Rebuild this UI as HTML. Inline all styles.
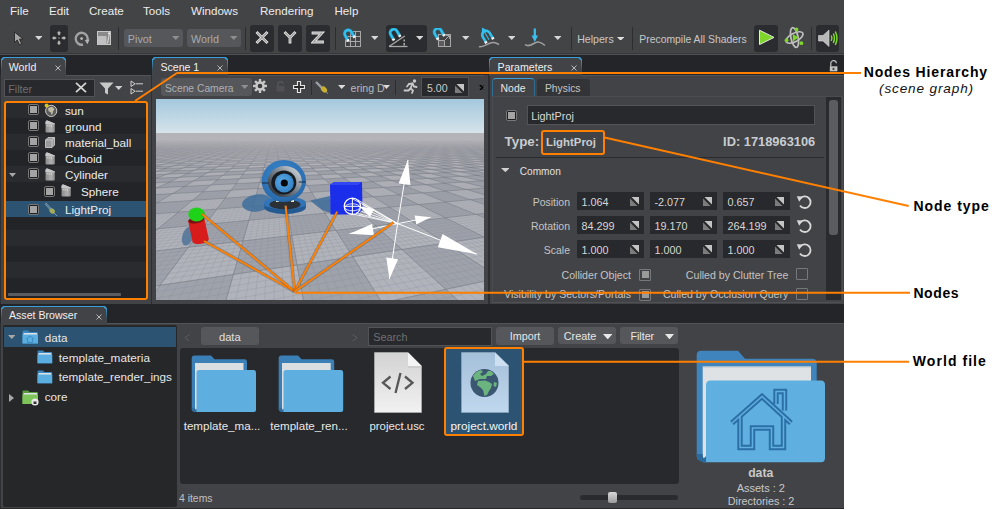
<!DOCTYPE html><html><head><meta charset="utf-8"><style>
html,body{margin:0;padding:0;background:#fff;width:1000px;height:510px;overflow:hidden;position:relative;}
.t{position:absolute;white-space:nowrap;font-family:"Liberation Sans", sans-serif;}
.r{position:absolute;}
</style></head><body>
<div class="r" style="left:0px;top:0px;width:844px;height:509px;background:#434446;"></div>
<div class="r" style="left:0px;top:508px;width:844px;height:1px;background:#2a2a2c;"></div>
<div class="t" style="left:10px;top:5px;font-size:11.6px;line-height:11.6px;color:#ececec;font-weight:normal;font-style:normal;letter-spacing:0px;">File</div>
<div class="t" style="left:49px;top:5px;font-size:11.6px;line-height:11.6px;color:#ececec;font-weight:normal;font-style:normal;letter-spacing:0px;">Edit</div>
<div class="t" style="left:89px;top:5px;font-size:11.6px;line-height:11.6px;color:#ececec;font-weight:normal;font-style:normal;letter-spacing:0px;">Create</div>
<div class="t" style="left:143px;top:5px;font-size:11.6px;line-height:11.6px;color:#ececec;font-weight:normal;font-style:normal;letter-spacing:0px;">Tools</div>
<div class="t" style="left:191px;top:5px;font-size:11.6px;line-height:11.6px;color:#ececec;font-weight:normal;font-style:normal;letter-spacing:0px;">Windows</div>
<div class="t" style="left:260px;top:5px;font-size:11.6px;line-height:11.6px;color:#ececec;font-weight:normal;font-style:normal;letter-spacing:0px;">Rendering</div>
<div class="t" style="left:334.5px;top:5px;font-size:11.6px;line-height:11.6px;color:#ececec;font-weight:normal;font-style:normal;letter-spacing:0px;">Help</div>
<div class="r" style="left:0px;top:53px;width:844px;height:1px;background:#37383b;"></div>
<div class="r" style="left:0px;top:54px;width:844px;height:1px;background:#505155;"></div>
<div class="r" style="left:0px;top:55px;width:844px;height:453px;background:#242528;"></div>
<svg class="r" style="left:13px;top:31px;" width="12" height="15" viewBox="0 0 12 15"><path d="M1.5 1L1.5 11.5L4.2 9L6.5 13.6L8.6 12.6L6.4 8.2L10 8Z" fill="#a4a4a4" stroke="#1e1e1e" stroke-width="0.8" stroke-linejoin="round"/></svg>
<svg class="r" style="left:34.75px;top:36px;" width="7.5" height="4" viewBox="0 0 7.5 4"><path d="M0 0H7.5L3.75 4Z" fill="#d8d8d8"/></svg>
<div class="r" style="left:50px;top:25px;width:18px;height:26.5px;background:#2b2c2f;border-radius:3px;"></div>
<svg class="r" style="left:50.5px;top:30px;" width="16" height="16" viewBox="0 0 16 16"><g fill="#b8b8b8" stroke="#111" stroke-width="0.5"><path d="M8 0.6L10.8 3.6H9.3V5.6H6.7V3.6H5.2Z"/><path d="M8 15.4L10.8 12.4H9.3V10.4H6.7V12.4H5.2Z"/><path d="M0.6 8L3.6 5.2V6.7H5.6V9.3H3.6V10.8Z"/><path d="M15.4 8L12.4 5.2V6.7H10.4V9.3H12.4V10.8Z"/><circle cx="8" cy="8" r="1"/></g></svg>
<svg class="r" style="left:73.5px;top:30.5px;" width="16" height="16" viewBox="0 0 16 16"><path d="M9 13.6A6 6 0 1 1 13.4 9.6" fill="none" stroke="#a4a4a4" stroke-width="2.3"/><path d="M10.8 9L15.6 8.6L13.4 13.2Z" fill="#b4b4b4"/><circle cx="7.6" cy="7.6" r="1.3" fill="#c4c4c4"/></svg>
<svg class="r" style="left:96.5px;top:30.5px;" width="14" height="14" viewBox="0 0 14 14"><rect x="0.5" y="0.5" width="13" height="13" fill="#8a8a8a" stroke="#c8c8c8" stroke-width="1"/><rect x="1" y="5" width="8.5" height="8.5" rx="1" fill="#c0c0c0"/><path d="M10.5 12.5L12.5 2" stroke="#e0e0e0" stroke-width="1"/><circle cx="12" cy="2.2" r="1" fill="#eee"/></svg>
<div class="r" style="left:118px;top:27px;width:1px;height:23px;background:#2c2d30;"></div>
<div class="r" style="left:124px;top:29px;width:59px;height:18px;background:#56575b;border-radius:3px;"></div>
<div class="t" style="left:127.8px;top:34px;font-size:10.8px;line-height:10.8px;color:#a9a9a9;font-weight:normal;font-style:normal;letter-spacing:0px;">Pivot</div>
<svg class="r" style="left:172px;top:36px;" width="7.5" height="4" viewBox="0 0 7.5 4"><path d="M0 0H7.5L3.75 4Z" fill="#8e8e8e"/></svg>
<div class="r" style="left:187px;top:29px;width:54px;height:18px;background:#56575b;border-radius:3px;"></div>
<div class="t" style="left:191px;top:34px;font-size:10.8px;line-height:10.8px;color:#a9a9a9;font-weight:normal;font-style:normal;letter-spacing:0px;">World</div>
<svg class="r" style="left:230px;top:36px;" width="7.5" height="4" viewBox="0 0 7.5 4"><path d="M0 0H7.5L3.75 4Z" fill="#8e8e8e"/></svg>
<div class="r" style="left:245px;top:27px;width:1px;height:23px;background:#2c2d30;"></div>
<div class="r" style="left:250px;top:25px;width:23.80000000000001px;height:26.5px;background:#2b2c2f;border-radius:3px;"></div>
<svg class="r" style="left:254.5px;top:31px;" width="14" height="13" viewBox="0 0 14 13"><path d="M2.5 2L11.5 11M11.5 2L2.5 11" fill="none" stroke="#e4e4e4" stroke-width="2.8" stroke-linecap="square"/><path d="M2.5 2L11.5 11M11.5 2L2.5 11" fill="none" stroke="#9c9c9c" stroke-width="1.1" stroke-linecap="square"/></svg>
<div class="r" style="left:278px;top:25px;width:23.80000000000001px;height:26.5px;background:#2b2c2f;border-radius:3px;"></div>
<svg class="r" style="left:282.5px;top:31px;" width="14" height="13" viewBox="0 0 14 13"><path d="M2.5 2L7 6.5L11.5 2M7 6.5V11" fill="none" stroke="#e4e4e4" stroke-width="2.8" stroke-linecap="square"/><path d="M2.5 2L7 6.5L11.5 2M7 6.5V11" fill="none" stroke="#9c9c9c" stroke-width="1.1" stroke-linecap="square"/></svg>
<div class="r" style="left:306px;top:25px;width:23.80000000000001px;height:26.5px;background:#2b2c2f;border-radius:3px;"></div>
<svg class="r" style="left:311px;top:31px;" width="14" height="13" viewBox="0 0 14 13"><path d="M2 2H11L2.5 11H11.5" fill="none" stroke="#e4e4e4" stroke-width="2.8" stroke-linecap="square"/><path d="M2 2H11L2.5 11H11.5" fill="none" stroke="#9c9c9c" stroke-width="1.1" stroke-linecap="square"/></svg>
<div class="r" style="left:335px;top:27px;width:1px;height:23px;background:#2c2d30;"></div>
<svg class="r" style="left:342px;top:28px;" width="20" height="20" viewBox="0 0 20 20"><g stroke="#a8a8a8" stroke-width="1" fill="none"><rect x="3.5" y="3.5" width="15" height="15"/><path d="M8.5 3.5V18.5M13.5 3.5V18.5M3.5 8.5H18.5M3.5 13.5H18.5"/></g><g transform="translate(6.2 5.6) rotate(-30)"><path d="M-3.6 4.8V0A3.6 3.6 0 0 1 3.6 0V4.8" fill="none" stroke="#1d7fa6" stroke-width="3.4"/><path d="M-3.6 4.8V0A3.6 3.6 0 0 1 3.6 0V4.8" fill="none" stroke="#34c0ec" stroke-width="2.4"/><rect x="-5" y="4.6" width="2.8" height="2.2" fill="#f4f4f4"/><rect x="2.2" y="4.6" width="2.8" height="2.2" fill="#f4f4f4"/></g></svg>
<svg class="r" style="left:370.6px;top:36px;" width="7.5" height="4" viewBox="0 0 7.5 4"><path d="M0 0H7.5L3.75 4Z" fill="#d8d8d8"/></svg>
<div class="r" style="left:386px;top:25px;width:41px;height:26.5px;background:#2b2c2f;border-radius:3px;"></div>
<svg class="r" style="left:387px;top:28px;" width="22" height="20" viewBox="0 0 22 20"><path d="M2 18.5H20.5" stroke="#a8a8a8" stroke-width="1.3"/><path d="M2 18.5L17.8 8" stroke="#a8a8a8" stroke-width="1.3"/><path d="M17.2 11.5V13.5M17.2 15V17.5" stroke="#a8a8a8" stroke-width="1.6"/><g transform="translate(6.8 4.8) rotate(-30)"><path d="M-3.6 4.8V0A3.6 3.6 0 0 1 3.6 0V4.8" fill="none" stroke="#1d7fa6" stroke-width="3.4"/><path d="M-3.6 4.8V0A3.6 3.6 0 0 1 3.6 0V4.8" fill="none" stroke="#34c0ec" stroke-width="2.4"/><rect x="-5" y="4.6" width="2.8" height="2.2" fill="#f4f4f4"/><rect x="2.2" y="4.6" width="2.8" height="2.2" fill="#f4f4f4"/></g></svg>
<svg class="r" style="left:415.6px;top:36px;" width="7.5" height="4" viewBox="0 0 7.5 4"><path d="M0 0H7.5L3.75 4Z" fill="#d8d8d8"/></svg>
<svg class="r" style="left:432px;top:28px;" width="21" height="20" viewBox="0 0 21 20"><g stroke="#a8a8a8" stroke-width="1" fill="none"><rect x="6.5" y="6.5" width="12" height="12"/><path d="M6.5 12.5H12.5V18.5M12.5 12.5L17 8M14.2 7.5H17.5V10.8"/></g><rect x="7" y="13" width="5" height="5" fill="#5c5c5e"/><g transform="translate(5.9 4) rotate(-30)"><path d="M-3.6 4.8V0A3.6 3.6 0 0 1 3.6 0V4.8" fill="none" stroke="#1d7fa6" stroke-width="3.4"/><path d="M-3.6 4.8V0A3.6 3.6 0 0 1 3.6 0V4.8" fill="none" stroke="#34c0ec" stroke-width="2.4"/><rect x="-5" y="4.6" width="2.8" height="2.2" fill="#f4f4f4"/><rect x="2.2" y="4.6" width="2.8" height="2.2" fill="#f4f4f4"/></g></svg>
<svg class="r" style="left:462px;top:36px;" width="7.5" height="4" viewBox="0 0 7.5 4"><path d="M0 0H7.5L3.75 4Z" fill="#d8d8d8"/></svg>
<svg class="r" style="left:478px;top:26px;" width="23" height="23" viewBox="0 0 23 23"><path d="M1 20.5C4 22 7 19 11 17.5S16 16 21 18.5" fill="none" stroke="#a0a0a0" stroke-width="1.5"/><g transform="translate(8 8.5) rotate(-30)"><path d="M-4 6V0.5A4 4 0 0 1 4 0.5V6" fill="none" stroke="#34c0ec" stroke-width="2.6"/><path d="M0 -1V6" stroke="#34c0ec" stroke-width="1"/><rect x="-5.4" y="5.6" width="2.8" height="2.2" fill="#f4f4f4"/><rect x="2.6" y="5.6" width="2.8" height="2.2" fill="#f4f4f4"/><path d="M0 -8L-2.8 -3.4H2.8Z" fill="#34c0ec"/><path d="M0 -4V-1" stroke="#34c0ec" stroke-width="1"/></g></svg>
<svg class="r" style="left:507.75px;top:36px;" width="7.5" height="4" viewBox="0 0 7.5 4"><path d="M0 0H7.5L3.75 4Z" fill="#d8d8d8"/></svg>
<svg class="r" style="left:524px;top:28px;" width="22" height="20" viewBox="0 0 22 20"><path d="M1 16.5C4 19 7 17 10.8 15S17 14.5 21 17.5" fill="none" stroke="#a0a0a0" stroke-width="1.5"/><path d="M10.8 0.5V9" stroke="#3cc0ee" stroke-width="2.2"/><path d="M7.6 7.5H14L10.8 14Z" fill="#3cc0ee"/></svg>
<svg class="r" style="left:553.75px;top:36px;" width="7.5" height="4" viewBox="0 0 7.5 4"><path d="M0 0H7.5L3.75 4Z" fill="#d8d8d8"/></svg>
<div class="r" style="left:570.5px;top:27px;width:1px;height:23px;background:#2c2d30;"></div>
<div class="t" style="left:577.2px;top:34px;font-size:10.6px;line-height:10.6px;color:#c8c8c8;font-weight:normal;font-style:normal;letter-spacing:0px;">Helpers</div>
<svg class="r" style="left:617px;top:36.5px;" width="7.3" height="3.8" viewBox="0 0 7.3 3.8"><path d="M0 0H7.3L3.65 3.8Z" fill="#e0e0e0"/></svg>
<div class="r" style="left:632px;top:27px;width:1px;height:23px;background:#2c2d30;"></div>
<div class="t" style="left:639.3px;top:35px;font-size:10.4px;line-height:10.4px;color:#c8c8c8;font-weight:normal;font-style:normal;letter-spacing:0px;">Precompile All Shaders</div>
<div class="r" style="left:754px;top:25px;width:24px;height:26.5px;background:#2b2c2f;border-radius:3px;"></div>
<svg class="r" style="left:758px;top:29px;" width="18" height="17" viewBox="0 0 18 17"><path d="M1.5 1.2V15.6L16 8.4Z" fill="#7fd62a" stroke="#e8e8e8" stroke-width="1"/></svg>
<svg class="r" style="left:784px;top:26px;" width="22" height="23" viewBox="0 0 22 23"><g fill="none" stroke="#c0c0c0" stroke-width="1.7"><ellipse cx="10.5" cy="11.5" rx="9.4" ry="4.2" transform="rotate(-28 10.5 11.5)"/><ellipse cx="10.5" cy="11.5" rx="10" ry="3.6" transform="rotate(78 10.5 11.5)"/></g><path d="M8.8 8V15.5L14.6 11.5Z" fill="#7fd62a"/><circle cx="12.5" cy="3.5" r="1.9" fill="#7fd62a"/><circle cx="2.5" cy="14.2" r="1.9" fill="#7fd62a"/><circle cx="17.4" cy="17.2" r="1.9" fill="#7fd62a"/></svg>
<div class="r" style="left:811px;top:27px;width:1px;height:23px;background:#2c2d30;"></div>
<div class="r" style="left:816.2px;top:25px;width:23.299999999999955px;height:26.5px;background:#2b2c2f;border-radius:3px;"></div>
<svg class="r" style="left:817px;top:27px;" width="22" height="22" viewBox="0 0 22 22"><path d="M1.5 8.5H6L12 3V19.5L6 14H1.5Z" fill="#b8b8b8" stroke="#d8d8d8" stroke-width="0.6"/><g fill="none" stroke="#7fd62a" stroke-width="1.5"><path d="M14.3 8.5Q15.6 11.2 14.3 14"/><path d="M16.3 6.5Q18.6 11.2 16.3 16"/><path d="M18.3 4.5Q21.6 11.2 18.3 18"/></g></svg>
<div class="r" style="left:1px;top:57px;width:65px;height:19px;background:#424346;border-radius:4px 4px 0 0;box-shadow:inset 0 1px 0 #3a9fd8;"></div>
<div class="r" style="left:1px;top:59px;width:1px;height:16px;background:linear-gradient(#3a9fd8,#3a4b58 70%,#45484c);"></div>
<div class="r" style="left:65px;top:59px;width:1px;height:16px;background:linear-gradient(#3a9fd8,#3a4b58 70%,#45484c);"></div>
<div class="r" style="left:2px;top:57px;width:63px;height:3px;border-top:1px solid #3a9fd8;border-radius:4px 4px 0 0;box-sizing:border-box;border-left:1px solid #3a9fd8;border-right:1px solid #3a9fd8;"></div>
<div class="t" style="left:8.8px;top:62px;font-size:10.6px;line-height:10.6px;color:#f0f0f0;font-weight:normal;font-style:normal;letter-spacing:0px;">World</div>
<svg class="r" style="left:54.7px;top:65px;" width="6" height="6" viewBox="0 0 6 6"><path d="M0.5 0.5L5.5 5.5M5.5 0.5L0.5 5.5" stroke="#c4c4c4" stroke-width="0.9"/></svg>
<div class="r" style="left:0px;top:75px;width:151px;height:229px;background:#424346;"></div>
<div class="r" style="left:66px;top:75px;width:85px;height:1px;background:#525356;"></div>
<div class="r" style="left:0px;top:75px;width:1px;height:229px;background:#2e2f32;"></div>
<div class="r" style="left:3.8px;top:78.5px;width:89.4px;height:16.3px;background:#28292c;border:1px solid #525357;"></div>
<div class="t" style="left:8.2px;top:84px;font-size:10.8px;line-height:10.8px;color:#6f6f6f;font-weight:normal;font-style:normal;letter-spacing:0px;">Filter</div>
<svg class="r" style="left:74.5px;top:82px;" width="12" height="11" viewBox="0 0 12 11"><path d="M1 0.8L11 10.2M11 0.8L1 10.2" stroke="#d4d4d4" stroke-width="1.8"/></svg>
<svg class="r" style="left:98.5px;top:81.5px;" width="15" height="13" viewBox="0 0 15 13"><path d="M0.5 0.5H14.5L9 6.5V12.5L6 11V6.5Z" fill="#c8c8c8"/></svg>
<svg class="r" style="left:114.8px;top:86px;" width="7.4" height="4" viewBox="0 0 7.4 4"><path d="M0 0H7.4L3.7 4Z" fill="#d0d0d0"/></svg>
<svg class="r" style="left:130px;top:80px;" width="14" height="16" viewBox="0 0 14 16"><g fill="none" stroke="#d0d0d0" stroke-width="1"><path d="M1 1V6.5L5 3.8Z"/><path d="M1 8.5V14L5 11.2Z"/><path d="M5.5 3.8H13M5.5 11.2H13"/></g></svg>
<div class="r" style="left:5px;top:102px;width:142px;height:16px;background:#2a2b2e;"></div>
<div class="r" style="left:5px;top:118px;width:142px;height:16px;background:#232427;"></div>
<div class="r" style="left:5px;top:134px;width:142px;height:16px;background:#2a2b2e;"></div>
<div class="r" style="left:5px;top:150px;width:142px;height:16px;background:#232427;"></div>
<div class="r" style="left:5px;top:166px;width:142px;height:16px;background:#2a2b2e;"></div>
<div class="r" style="left:5px;top:182px;width:142px;height:19px;background:#232427;"></div>
<div class="r" style="left:5px;top:201px;width:142px;height:16px;background:#2c5472;"></div>
<div class="r" style="left:5px;top:217px;width:142px;height:12.6px;background:#232427;"></div>
<div class="r" style="left:5px;top:229.6px;width:142px;height:16px;background:#2a2b2e;"></div>
<div class="r" style="left:5px;top:245.6px;width:142px;height:16px;background:#232427;"></div>
<div class="r" style="left:5px;top:261.6px;width:142px;height:16px;background:#2a2b2e;"></div>
<div class="r" style="left:5px;top:277.6px;width:142px;height:12.4px;background:#232427;"></div>
<div class="r" style="left:5px;top:290px;width:142px;height:8px;background:#232427;"></div>
<div class="r" style="left:7.8px;top:293px;width:113.2px;height:3px;background:#5b5c5f;border-radius:1px;"></div>
<div class="r" style="left:28px;top:104px;width:9px;height:9px;border:1px solid #787878;border-radius:2px;background:#1e1f22;"></div>
<div class="r" style="left:30px;top:106px;width:7px;height:7px;background:#a4a4a4;"></div>
<svg class="r" style="left:44px;top:103px;" width="14" height="14" viewBox="0 0 14 14"><circle cx="7.2" cy="7.9" r="5.6" fill="#5c5c5c" stroke="#c8c8c8" stroke-width="1"/><path d="M4 5.5Q6 3.4 9 4.2L10.5 6.2L9.2 8L8.6 10.8L7.4 11.8L6.8 9.2L4.6 8.2Z" fill="#bdbba4"/><circle cx="2.6" cy="2.6" r="2" fill="#e6d020" opacity="0.9"/></svg>
<div class="t" style="left:65px;top:105px;font-size:11.7px;line-height:11.7px;color:#ececec;font-weight:normal;font-style:normal;letter-spacing:0px;">sun</div>
<div class="r" style="left:28px;top:120px;width:9px;height:9px;border:1px solid #787878;border-radius:2px;background:#1e1f22;"></div>
<div class="r" style="left:30px;top:122px;width:7px;height:7px;background:#a4a4a4;"></div>
<svg class="r" style="left:45px;top:120px;" width="11" height="13" viewBox="0 0 11 13"><defs><linearGradient id="ni" x1="0" y1="0" x2="1" y2="0"><stop offset="0" stop-color="#8a8a8a"/><stop offset="0.6" stop-color="#b0b0b0"/><stop offset="1" stop-color="#8c8c8c"/></linearGradient></defs><path d="M0.5 2Q0.8 0.4 2.5 0.6L9.8 3.6V11.5Q9.8 12.5 8.8 12.5H1.5Q0.5 12.5 0.5 11.5Z" fill="url(#ni)"/><path d="M0.5 2Q0.8 0.4 2.5 0.6L9.8 3.6V4.6L0.5 4.2Z" fill="#c6c6c6"/><circle cx="2.2" cy="5.8" r="0.6" fill="#eee"/><circle cx="4.2" cy="5.9" r="0.6" fill="#eee"/><circle cx="6.6" cy="6.1" r="0.6" fill="#eee"/></svg>
<div class="t" style="left:65px;top:121px;font-size:11.7px;line-height:11.7px;color:#ececec;font-weight:normal;font-style:normal;letter-spacing:0px;">ground</div>
<div class="r" style="left:28px;top:136px;width:9px;height:9px;border:1px solid #787878;border-radius:2px;background:#1e1f22;"></div>
<div class="r" style="left:30px;top:138px;width:7px;height:7px;background:#a4a4a4;"></div>
<svg class="r" style="left:45px;top:136.5px;" width="10" height="11" viewBox="0 0 10 11"><path d="M0.5 3L3 0.5H9.5V8L7 10.5H0.5Z" fill="#9a9a9a" stroke="#d6d6d6" stroke-width="0.8"/><path d="M0.5 3H7V10.5M7 3L9.5 0.5" stroke="#d6d6d6" stroke-width="0.7" fill="none"/></svg>
<div class="t" style="left:65px;top:137px;font-size:11.7px;line-height:11.7px;color:#ececec;font-weight:normal;font-style:normal;letter-spacing:0px;">material_ball</div>
<div class="r" style="left:28px;top:152px;width:9px;height:9px;border:1px solid #787878;border-radius:2px;background:#1e1f22;"></div>
<div class="r" style="left:30px;top:154px;width:7px;height:7px;background:#a4a4a4;"></div>
<svg class="r" style="left:45px;top:152px;" width="11" height="13" viewBox="0 0 11 13"><defs><linearGradient id="ni" x1="0" y1="0" x2="1" y2="0"><stop offset="0" stop-color="#8a8a8a"/><stop offset="0.6" stop-color="#b0b0b0"/><stop offset="1" stop-color="#8c8c8c"/></linearGradient></defs><path d="M0.5 2Q0.8 0.4 2.5 0.6L9.8 3.6V11.5Q9.8 12.5 8.8 12.5H1.5Q0.5 12.5 0.5 11.5Z" fill="url(#ni)"/><path d="M0.5 2Q0.8 0.4 2.5 0.6L9.8 3.6V4.6L0.5 4.2Z" fill="#c6c6c6"/><circle cx="2.2" cy="5.8" r="0.6" fill="#eee"/><circle cx="4.2" cy="5.9" r="0.6" fill="#eee"/><circle cx="6.6" cy="6.1" r="0.6" fill="#eee"/></svg>
<div class="t" style="left:65px;top:153px;font-size:11.7px;line-height:11.7px;color:#ececec;font-weight:normal;font-style:normal;letter-spacing:0px;">Cuboid</div>
<div class="r" style="left:28px;top:168px;width:9px;height:9px;border:1px solid #787878;border-radius:2px;background:#1e1f22;"></div>
<div class="r" style="left:30px;top:170px;width:7px;height:7px;background:#a4a4a4;"></div>
<svg class="r" style="left:45px;top:168px;" width="11" height="13" viewBox="0 0 11 13"><defs><linearGradient id="ni" x1="0" y1="0" x2="1" y2="0"><stop offset="0" stop-color="#8a8a8a"/><stop offset="0.6" stop-color="#b0b0b0"/><stop offset="1" stop-color="#8c8c8c"/></linearGradient></defs><path d="M0.5 2Q0.8 0.4 2.5 0.6L9.8 3.6V11.5Q9.8 12.5 8.8 12.5H1.5Q0.5 12.5 0.5 11.5Z" fill="url(#ni)"/><path d="M0.5 2Q0.8 0.4 2.5 0.6L9.8 3.6V4.6L0.5 4.2Z" fill="#c6c6c6"/><circle cx="2.2" cy="5.8" r="0.6" fill="#eee"/><circle cx="4.2" cy="5.9" r="0.6" fill="#eee"/><circle cx="6.6" cy="6.1" r="0.6" fill="#eee"/></svg>
<div class="t" style="left:65px;top:169px;font-size:11.7px;line-height:11.7px;color:#ececec;font-weight:normal;font-style:normal;letter-spacing:0px;">Cylinder</div>
<div class="r" style="left:44px;top:186px;width:9px;height:9px;border:1px solid #787878;border-radius:2px;background:#1e1f22;"></div>
<div class="r" style="left:46px;top:188px;width:7px;height:7px;background:#a4a4a4;"></div>
<svg class="r" style="left:61px;top:184px;" width="11" height="13" viewBox="0 0 11 13"><defs><linearGradient id="ni" x1="0" y1="0" x2="1" y2="0"><stop offset="0" stop-color="#8a8a8a"/><stop offset="0.6" stop-color="#b0b0b0"/><stop offset="1" stop-color="#8c8c8c"/></linearGradient></defs><path d="M0.5 2Q0.8 0.4 2.5 0.6L9.8 3.6V11.5Q9.8 12.5 8.8 12.5H1.5Q0.5 12.5 0.5 11.5Z" fill="url(#ni)"/><path d="M0.5 2Q0.8 0.4 2.5 0.6L9.8 3.6V4.6L0.5 4.2Z" fill="#c6c6c6"/><circle cx="2.2" cy="5.8" r="0.6" fill="#eee"/><circle cx="4.2" cy="5.9" r="0.6" fill="#eee"/><circle cx="6.6" cy="6.1" r="0.6" fill="#eee"/></svg>
<div class="t" style="left:81px;top:186px;font-size:11.7px;line-height:11.7px;color:#ececec;font-weight:normal;font-style:normal;letter-spacing:0px;">Sphere</div>
<div class="r" style="left:28px;top:204px;width:9px;height:9px;border:1px solid #787878;border-radius:2px;background:#1e1f22;"></div>
<div class="r" style="left:30px;top:206px;width:7px;height:7px;background:#a4a4a4;"></div>
<svg class="r" style="left:44px;top:202px;" width="14" height="15" viewBox="0 0 14 15"><path d="M1.5 1.5L7 7.5" stroke="#7f9fb8" stroke-width="2.6" stroke-dasharray="1 0.6"/><ellipse cx="8.2" cy="9" rx="3" ry="2.3" transform="rotate(45 8.2 9)" fill="#a4ac5c"/><path d="M9.5 10.5L13 14" stroke="#90b0c8" stroke-width="0.8"/></svg>
<div class="t" style="left:65px;top:204px;font-size:11.7px;line-height:11.7px;color:#ececec;font-weight:normal;font-style:normal;letter-spacing:0px;">LightProj</div>
<svg class="r" style="left:9px;top:173px;" width="7" height="4" viewBox="0 0 7 4"><path d="M0 0H7L3.5 4Z" fill="#a8a8a8"/></svg>
<div class="r" style="left:4px;top:101px;width:140px;height:194.5px;border:2px solid #ff8000;border-radius:3px;"></div>
<div class="r" style="left:152px;top:57px;width:76px;height:19px;background:#424346;border-radius:4px 4px 0 0;box-shadow:inset 0 1px 0 #3a9fd8;"></div>
<div class="r" style="left:152px;top:59px;width:1px;height:16px;background:linear-gradient(#3a9fd8,#3a4b58 70%,#45484c);"></div>
<div class="r" style="left:227px;top:59px;width:1px;height:16px;background:linear-gradient(#3a9fd8,#3a4b58 70%,#45484c);"></div>
<div class="r" style="left:153px;top:57px;width:74px;height:3px;border-top:1px solid #3a9fd8;border-radius:4px 4px 0 0;box-sizing:border-box;border-left:1px solid #3a9fd8;border-right:1px solid #3a9fd8;"></div>
<div class="t" style="left:160.4px;top:62px;font-size:10.6px;line-height:10.6px;color:#f0f0f0;font-weight:normal;font-style:normal;letter-spacing:0px;">Scene 1</div>
<svg class="r" style="left:216.8px;top:65px;" width="6" height="6" viewBox="0 0 6 6"><path d="M0.5 0.5L5.5 5.5M5.5 0.5L0.5 5.5" stroke="#c4c4c4" stroke-width="0.9"/></svg>
<div class="r" style="left:152px;top:75px;width:336px;height:229px;background:#424346;"></div>
<div class="r" style="left:228px;top:75px;width:260px;height:1px;background:#525356;"></div>
<div class="r" style="left:151px;top:75px;width:1px;height:229px;background:#2e2f32;"></div>
<div class="r" style="left:161px;top:78px;width:91px;height:18px;background:#56575b;border-radius:3px;"></div>
<div class="t" style="left:164.9px;top:84px;font-size:10.3px;line-height:10.3px;color:#aeb0b2;font-weight:normal;font-style:normal;letter-spacing:0px;">Scene Camera</div>
<svg class="r" style="left:240.8px;top:85px;" width="7.4" height="4" viewBox="0 0 7.4 4"><path d="M0 0H7.4L3.7 4Z" fill="#8e8e8e"/></svg>
<svg class="r" style="left:253px;top:79px;" width="14" height="14" viewBox="0 0 14 14"><rect x="5.8" y="0" width="2.4" height="4" fill="#c8c8c8" transform="rotate(0 7 7)"/><rect x="5.8" y="0" width="2.4" height="4" fill="#c8c8c8" transform="rotate(45 7 7)"/><rect x="5.8" y="0" width="2.4" height="4" fill="#c8c8c8" transform="rotate(90 7 7)"/><rect x="5.8" y="0" width="2.4" height="4" fill="#c8c8c8" transform="rotate(135 7 7)"/><rect x="5.8" y="0" width="2.4" height="4" fill="#c8c8c8" transform="rotate(180 7 7)"/><rect x="5.8" y="0" width="2.4" height="4" fill="#c8c8c8" transform="rotate(225 7 7)"/><rect x="5.8" y="0" width="2.4" height="4" fill="#c8c8c8" transform="rotate(270 7 7)"/><rect x="5.8" y="0" width="2.4" height="4" fill="#c8c8c8" transform="rotate(315 7 7)"/><circle cx="7" cy="7" r="4.8" fill="#c8c8c8"/><circle cx="7" cy="7" r="2.3" fill="#3a3b3e"/></svg>
<svg class="r" style="left:275.5px;top:81px;" width="9" height="11" viewBox="0 0 9 11"><path d="M2 5V3A2.5 2.5 0 0 1 7 3" fill="none" stroke="#555659" stroke-width="1.3"/><rect x="0.5" y="5" width="8" height="5.5" fill="#505154"/></svg>
<svg class="r" style="left:292.5px;top:81px;" width="12" height="12" viewBox="0 0 12 12"><path d="M4.5 0.5H7.5V4.5H11.5V7.5H7.5V11.5H4.5V7.5H0.5V4.5H4.5Z" fill="#2a2a2a" stroke="#e6e6e6" stroke-width="1.2"/></svg>
<div class="r" style="left:311px;top:80px;width:1px;height:15px;background:#2c2d30;"></div>
<svg class="r" style="left:315px;top:81px;" width="14" height="13" viewBox="0 0 14 13"><path d="M1 1L7 7" stroke="#9aa0a6" stroke-width="2.4"/><ellipse cx="9" cy="8.5" rx="3.5" ry="2.6" transform="rotate(45 9 8.5)" fill="#c8b030"/><path d="M10 10L13 12.5" stroke="#aaa" stroke-width="0.8"/></svg>
<svg class="r" style="left:337.8px;top:85px;" width="7.4" height="4" viewBox="0 0 7.4 4"><path d="M0 0H7.4L3.7 4Z" fill="#dcdcdc"/></svg>
<div class="t" style="left:350.5px;top:83px;font-size:10.6px;line-height:10.6px;color:#b8babc;font-weight:normal;font-style:normal;letter-spacing:0px;">ering D</div>
<svg class="r" style="left:382.5px;top:85px;" width="7" height="4" viewBox="0 0 7 4"><path d="M0 0H7L3.5 4Z" fill="#dcdcdc"/></svg>
<div class="r" style="left:395px;top:80px;width:1px;height:15px;background:#2c2d30;"></div>
<svg class="r" style="left:403px;top:79px;" width="15" height="15" viewBox="0 0 15 15"><g fill="none" stroke="#c8c8c8" stroke-width="1.8" stroke-linecap="round" stroke-linejoin="round"><path d="M6 5L9.5 4.5L11 7.5L13.5 8"/><path d="M9.5 4.5L7.5 9.5L10 11.5L9 14"/><path d="M7.5 9.5L5.5 11.5H1.5"/><path d="M6 5L4 7.5"/></g><circle cx="11.5" cy="2" r="1.7" fill="#c8c8c8"/></svg>
<div class="r" style="left:421px;top:77px;width:45.5px;height:17.5px;background:#28292c;border:1px solid #525357;"></div>
<div class="t" style="left:427px;top:83px;font-size:10.6px;line-height:10.6px;color:#c8c8c8;font-weight:normal;font-style:normal;letter-spacing:0px;">5.00</div>
<svg class="r" style="left:454.5px;top:83.5px;" width="9" height="9" viewBox="0 0 9 9"><path d="M1.5 0H9V7.5Z" fill="#c4c4c4"/><path d="M0 1.5V9H7.5Z" fill="#7c7c7c"/></svg>
<svg class="r" style="left:478.5px;top:85px;" width="9" height="5.2" viewBox="0 0 9 5.2"><path d="M0 0H2.1L4.6 2.6L2.1 5.2H0L2.5 2.6Z" fill="#000"/><path d="M4 0H6.1L8.6 2.6L6.1 5.2H4L6.5 2.6Z" fill="#000"/></svg>
<svg class="r" style="left:156px;top:99px;" width="328" height="201" viewBox="0 0 328 201"><defs><linearGradient id="sky" x1="0" y1="0" x2="0" y2="1"><stop offset="0" stop-color="#a4c8dd"/><stop offset="1" stop-color="#d6e3ea"/></linearGradient><linearGradient id="fl" x1="0" y1="0" x2="0" y2="1"><stop offset="0" stop-color="#b8b6ba"/><stop offset="0.25" stop-color="#b2b3b9"/><stop offset="1" stop-color="#b0b3bb"/></linearGradient></defs><rect x="0" y="0" width="328" height="34" fill="url(#sky)"/><rect x="0" y="34" width="328" height="167" fill="url(#fl)"/><defs><linearGradient id="mg1" x1="0" y1="0" x2="0" y2="201" gradientUnits="userSpaceOnUse"><stop offset="0.318" stop-color="#fff" stop-opacity="0"/><stop offset="0.716" stop-color="#fff" stop-opacity="1"/></linearGradient><mask id="m1"><rect x="0" y="0" width="328" height="201" fill="url(#mg1)"/></mask><linearGradient id="mg2" x1="0" y1="0" x2="0" y2="201" gradientUnits="userSpaceOnUse"><stop offset="0.184" stop-color="#fff" stop-opacity="0"/><stop offset="0.343" stop-color="#fff" stop-opacity="1"/></linearGradient><mask id="m2"><rect x="0" y="0" width="328" height="201" fill="url(#mg2)"/></mask></defs><g mask="url(#m2)" fill="#7f8590" fill-opacity="0.36"><path d="M-7.1 46.0L-0.8 45.9L2.2 45.6L-3.9 45.7Z"/><path d="M-4.0 46.2L2.3 46.1L5.3 45.8L-0.8 45.9Z"/><path d="M2.2 45.6L8.2 45.5L10.9 45.2L5.0 45.3Z"/><path d="M-7.7 47.2L-0.8 47.1L2.5 46.7L-4.2 46.8Z"/><path d="M-0.8 46.5L5.6 46.4L8.6 46.1L2.3 46.1Z"/><path d="M5.3 45.8L11.4 45.7L14.1 45.4L8.2 45.5Z"/><path d="M-4.3 47.5L2.7 47.4L6.0 47.0L-0.8 47.1Z"/><path d="M2.5 46.7L9.1 46.6L12.0 46.3L5.6 46.4Z"/><path d="M8.6 46.1L14.8 46.0L17.4 45.7L11.4 45.7Z"/><path d="M-8.4 48.7L-0.8 48.6L2.9 48.1L-4.5 48.2Z"/><path d="M-0.8 47.8L6.4 47.7L9.6 47.3L2.7 47.4Z"/><path d="M6.0 47.0L12.7 46.9L15.6 46.6L9.1 46.6Z"/><path d="M12.0 46.3L18.3 46.2L20.9 45.9L14.8 46.0Z"/><path d="M17.4 45.7L23.4 45.6L25.7 45.3L19.9 45.4Z"/><path d="M-4.7 49.1L3.2 48.9L6.8 48.5L-0.8 48.6Z"/><path d="M2.9 48.1L10.2 48.0L13.4 47.6L6.4 47.7Z"/><path d="M9.6 47.3L16.4 47.2L19.3 46.8L12.7 46.9Z"/><path d="M15.6 46.6L22.0 46.5L24.5 46.2L18.3 46.2Z"/><path d="M20.9 45.9L27.0 45.8L29.3 45.5L23.4 45.6Z"/><path d="M-9.3 50.6L-0.7 50.4L3.4 49.9L-4.9 50.0Z"/><path d="M-0.7 49.4L7.3 49.3L10.9 48.8L3.2 48.9Z"/><path d="M6.8 48.5L14.2 48.4L17.4 47.9L10.2 48.0Z"/><path d="M13.4 47.6L20.4 47.5L23.2 47.1L16.4 47.2Z"/><path d="M19.3 46.8L25.8 46.8L28.3 46.4L22.0 46.5Z"/><path d="M24.5 46.2L30.7 46.1L32.9 45.8L27.0 45.8Z"/><path d="M29.3 45.5L35.1 45.5L37.1 45.2L31.5 45.3Z"/><path d="M-5.1 51.0L3.7 50.9L7.8 50.3L-0.7 50.4Z"/><path d="M3.4 49.9L11.6 49.7L15.2 49.2L7.3 49.3Z"/><path d="M10.9 48.8L18.5 48.7L21.6 48.3L14.2 48.4Z"/><path d="M17.4 47.9L24.5 47.8L27.2 47.4L20.4 47.5Z"/><path d="M23.2 47.1L29.8 47.0L32.3 46.7L25.8 46.8Z"/><path d="M28.3 46.4L34.6 46.3L36.8 46.0L30.7 46.1Z"/><path d="M32.9 45.8L38.8 45.7L40.8 45.4L35.1 45.5Z"/><path d="M-10.5 53.0L-0.6 52.8L4.1 52.1L-5.4 52.3Z"/><path d="M-0.6 51.5L8.4 51.4L12.4 50.8L3.7 50.9Z"/><path d="M7.8 50.3L16.2 50.2L19.7 49.6L11.6 49.7Z"/><path d="M15.2 49.2L22.9 49.1L25.9 48.6L18.5 48.7Z"/><path d="M21.6 48.3L28.8 48.2L31.5 47.7L24.5 47.8Z"/><path d="M27.2 47.4L34.0 47.3L36.4 46.9L29.8 47.0Z"/><path d="M32.3 46.7L38.6 46.6L40.8 46.3L34.6 46.3Z"/><path d="M36.8 46.0L42.8 45.9L44.7 45.6L38.8 45.7Z"/><path d="M-5.7 53.6L4.5 53.4L9.1 52.7L-0.6 52.8Z"/><path d="M4.1 52.1L13.4 51.9L17.3 51.2L8.4 51.4Z"/><path d="M12.4 50.8L21.0 50.6L24.4 50.0L16.2 50.2Z"/><path d="M19.7 49.6L27.6 49.5L30.5 49.0L22.9 49.1Z"/><path d="M25.9 48.6L33.3 48.5L35.9 48.1L28.8 48.2Z"/><path d="M31.5 47.7L38.4 47.6L40.7 47.2L34.0 47.3Z"/><path d="M36.4 46.9L42.9 46.9L44.9 46.5L38.6 46.6Z"/><path d="M40.8 46.3L46.9 46.2L48.7 45.9L42.8 45.9Z"/><path d="M44.7 45.6L50.5 45.6L52.1 45.3L46.5 45.3Z"/><path d="M-12.1 56.3L-0.5 56.1L5.0 55.0L-6.1 55.3Z"/><path d="M-0.6 54.3L9.9 54.1L14.5 53.3L4.5 53.4Z"/><path d="M9.1 52.7L18.7 52.5L22.5 51.8L13.4 51.9Z"/><path d="M17.3 51.2L26.1 51.1L29.4 50.5L21.0 50.6Z"/><path d="M24.4 50.0L32.5 49.9L35.4 49.4L27.6 49.5Z"/><path d="M30.5 49.0L38.1 48.9L40.6 48.4L33.3 48.5Z"/><path d="M35.9 48.1L42.9 48.0L45.2 47.5L38.4 47.6Z"/><path d="M40.7 47.2L47.3 47.2L49.2 46.8L42.9 46.9Z"/><path d="M44.9 46.5L51.1 46.4L52.9 46.1L46.9 46.2Z"/><path d="M48.7 45.9L54.6 45.8L56.2 45.5L50.5 45.6Z"/><path d="M-6.5 57.2L5.5 56.9L10.9 55.8L-0.5 56.1Z"/><path d="M5.0 55.0L15.8 54.8L20.2 53.9L9.9 54.1Z"/><path d="M14.5 53.3L24.3 53.1L28.1 52.3L18.7 52.5Z"/><path d="M22.5 51.8L31.5 51.6L34.7 50.9L26.1 51.1Z"/><path d="M29.4 50.5L37.7 50.3L40.5 49.8L32.5 49.9Z"/><path d="M35.4 49.4L43.1 49.2L45.5 48.8L38.1 48.9Z"/><path d="M40.6 48.4L47.7 48.3L49.9 47.9L42.9 48.0Z"/><path d="M45.2 47.5L51.9 47.4L53.8 47.1L47.3 47.2Z"/><path d="M49.2 46.8L55.5 46.7L57.2 46.4L51.1 46.4Z"/><path d="M52.9 46.1L58.8 46.0L60.3 45.7L54.6 45.8Z"/><path d="M56.2 45.5L61.8 45.4L63.2 45.1L57.7 45.2Z"/><path d="M-14.4 61.0L-0.3 60.6L6.2 59.1L-7.0 59.5Z"/><path d="M-0.4 58.1L12.0 57.8L17.3 56.6L5.5 56.9Z"/><path d="M10.9 55.8L22.0 55.6L26.3 54.6L15.8 54.8Z"/><path d="M20.2 53.9L30.3 53.7L33.9 52.9L24.3 53.1Z"/><path d="M28.1 52.3L37.3 52.1L40.3 51.4L31.5 51.6Z"/><path d="M34.7 50.9L43.2 50.8L45.8 50.2L37.7 50.3Z"/><path d="M40.5 49.8L48.3 49.6L50.6 49.1L43.1 49.2Z"/><path d="M45.5 48.8L52.8 48.6L54.8 48.2L47.7 48.3Z"/><path d="M49.9 47.9L56.7 47.8L58.5 47.4L51.9 47.4Z"/><path d="M53.8 47.1L60.2 47.0L61.8 46.6L55.5 46.7Z"/><path d="M57.2 46.4L63.3 46.3L64.7 46.0L58.8 46.0Z"/><path d="M60.3 45.7L66.1 45.7L67.4 45.4L61.8 45.4Z"/><path d="M-7.7 62.2L7.0 61.8L13.4 60.2L-0.3 60.6Z"/><path d="M6.2 59.1L19.0 58.8L24.1 57.5L12.0 57.8Z"/><path d="M17.3 56.6L28.7 56.4L32.9 55.3L22.0 55.6Z"/><path d="M26.3 54.6L36.7 54.4L40.2 53.5L30.3 53.7Z"/><path d="M33.9 52.9L43.4 52.7L46.3 52.0L37.3 52.1Z"/><path d="M40.3 51.4L49.0 51.3L51.5 50.7L43.2 50.8Z"/><path d="M45.8 50.2L53.8 50.1L56.0 49.5L48.3 49.6Z"/><path d="M50.6 49.1L58.1 49.0L60.0 48.5L52.8 48.6Z"/><path d="M54.8 48.2L61.8 48.1L63.4 47.7L56.7 47.8Z"/><path d="M58.5 47.4L65.0 47.3L66.5 46.9L60.2 47.0Z"/><path d="M61.8 46.6L67.9 46.5L69.3 46.2L63.3 46.3Z"/><path d="M64.7 46.0L70.5 45.9L71.7 45.6L66.1 45.7Z"/><path d="M-17.9 68.1L-0.1 67.5L8.0 65.2L-8.4 65.7Z"/><path d="M-0.2 63.7L15.0 63.2L21.2 61.5L7.0 61.8Z"/><path d="M13.4 60.2L26.7 59.9L31.6 58.5L19.0 58.8Z"/><path d="M24.1 57.5L36.0 57.3L40.0 56.1L28.7 56.4Z"/><path d="M32.9 55.3L43.6 55.1L46.8 54.2L36.7 54.4Z"/><path d="M40.2 53.5L49.8 53.3L52.6 52.5L43.4 52.7Z"/><path d="M46.3 52.0L55.2 51.8L57.5 51.1L49.0 51.3Z"/><path d="M51.5 50.7L59.7 50.5L61.7 49.9L53.8 50.1Z"/><path d="M56.0 49.5L63.6 49.4L65.4 48.9L58.1 49.0Z"/><path d="M60.0 48.5L67.1 48.4L68.6 48.0L61.8 48.1Z"/><path d="M63.4 47.7L70.1 47.6L71.5 47.2L65.0 47.3Z"/><path d="M66.5 46.9L72.8 46.8L74.0 46.5L67.9 46.5Z"/><path d="M69.3 46.2L75.2 46.1L76.3 45.8L70.5 45.9Z"/><path d="M71.7 45.6L77.3 45.5L78.3 45.2L72.9 45.3Z"/><path d="M-33.5 77.0L-10.8 76.1L0.1 72.5L-20.4 73.3Z"/><path d="M-9.5 70.2L9.2 69.5L17.1 67.0L-0.1 67.5Z"/><path d="M8.0 65.2L23.9 64.7L29.8 62.8L15.0 63.2Z"/><path d="M21.2 61.5L35.0 61.1L39.7 59.6L26.7 59.9Z"/><path d="M31.6 58.5L43.8 58.2L47.6 57.0L36.0 57.3Z"/><path d="M40.0 56.1L50.9 55.9L54.0 54.9L43.6 55.1Z"/><path d="M46.8 54.2L56.8 54.0L59.3 53.1L49.8 53.3Z"/><path d="M52.6 52.5L61.7 52.4L63.9 51.7L55.2 51.8Z"/><path d="M57.5 51.1L65.9 51.0L67.7 50.4L59.7 50.5Z"/><path d="M61.7 49.9L69.5 49.8L71.1 49.3L63.6 49.4Z"/><path d="M65.4 48.9L72.6 48.8L74.0 48.3L67.1 48.4Z"/><path d="M68.6 48.0L75.4 47.9L76.6 47.5L70.1 47.6Z"/><path d="M71.5 47.2L77.8 47.1L78.9 46.7L72.8 46.8Z"/><path d="M74.0 46.5L80.0 46.4L81.0 46.1L75.2 46.1Z"/><path d="M76.3 45.8L81.9 45.7L82.8 45.4L77.3 45.5Z"/><path d="M-23.9 80.4L0.3 79.3L10.9 75.2L-10.8 76.1Z"/><path d="M0.1 72.5L19.8 71.8L27.3 68.9L9.2 69.5Z"/><path d="M17.1 67.0L33.7 66.4L39.3 64.3L23.9 64.7Z"/><path d="M29.8 62.8L44.2 62.4L48.5 60.7L35.0 61.1Z"/><path d="M39.7 59.6L52.3 59.2L55.8 57.9L43.8 58.2Z"/><path d="M47.6 57.0L58.9 56.7L61.7 55.6L50.9 55.9Z"/><path d="M54.0 54.9L64.2 54.7L66.5 53.8L56.8 54.0Z"/><path d="M59.3 53.1L68.7 52.9L70.6 52.2L61.7 52.4Z"/><path d="M63.9 51.7L72.4 51.5L74.1 50.8L65.9 51.0Z"/><path d="M67.7 50.4L75.7 50.2L77.1 49.7L69.5 49.8Z"/><path d="M71.1 49.3L78.5 49.2L79.7 48.7L72.6 48.8Z"/><path d="M74.0 48.3L80.9 48.2L82.0 47.8L75.4 47.9Z"/><path d="M76.6 47.5L83.1 47.4L84.1 47.0L77.8 47.1Z"/><path d="M78.9 46.7L85.0 46.6L85.9 46.3L80.0 46.4Z"/><path d="M81.0 46.1L86.7 46.0L87.5 45.7L81.9 45.7Z"/><path d="M-49.6 98.5L-15.4 96.5L0.6 88.9L-28.8 90.5Z"/><path d="M-12.7 84.3L13.2 83.0L23.4 78.3L0.3 79.3Z"/><path d="M10.9 75.2L31.7 74.4L38.7 71.1L19.8 71.8Z"/><path d="M27.3 68.9L44.7 68.3L49.8 65.9L33.7 66.4Z"/><path d="M39.3 64.3L54.2 63.8L58.1 62.0L44.2 62.4Z"/><path d="M48.5 60.7L61.6 60.4L64.7 58.9L52.3 59.2Z"/><path d="M55.8 57.9L67.4 57.6L69.9 56.5L58.9 56.7Z"/><path d="M61.7 55.6L72.2 55.4L74.2 54.5L64.2 54.7Z"/><path d="M66.5 53.8L76.1 53.6L77.8 52.8L68.7 52.9Z"/><path d="M70.6 52.2L79.4 52.0L80.8 51.3L72.4 51.5Z"/><path d="M74.1 50.8L82.2 50.7L83.4 50.1L75.7 50.2Z"/><path d="M77.1 49.7L84.6 49.6L85.7 49.1L78.5 49.2Z"/><path d="M79.7 48.7L86.7 48.6L87.7 48.1L80.9 48.2Z"/><path d="M82.0 47.8L88.6 47.7L89.5 47.3L83.1 47.4Z"/><path d="M84.1 47.0L90.3 46.9L91.0 46.6L85.0 46.6Z"/><path d="M85.9 46.3L91.7 46.2L92.4 45.9L86.7 46.0Z"/><path d="M87.5 45.7L93.1 45.6L93.7 45.3L88.3 45.4Z"/><path d="M-36.6 106.4L1.1 103.8L16.6 94.6L-15.4 96.5Z"/><path d="M0.6 88.9L28.5 87.5L37.9 81.8L13.2 83.0Z"/><path d="M23.4 78.3L45.5 77.3L51.7 73.6L31.7 74.4Z"/><path d="M38.7 71.1L57.0 70.4L61.5 67.7L44.7 68.3Z"/><path d="M49.8 65.9L65.4 65.4L68.8 63.4L54.2 63.8Z"/><path d="M58.1 62.0L71.7 61.6L74.3 60.0L61.6 60.4Z"/><path d="M64.7 58.9L76.7 58.6L78.8 57.4L67.4 57.6Z"/><path d="M69.9 56.5L80.7 56.2L82.4 55.2L72.2 55.4Z"/><path d="M74.2 54.5L84.0 54.2L85.4 53.4L76.1 53.6Z"/><path d="M77.8 52.8L86.8 52.6L88.0 51.9L79.4 52.0Z"/><path d="M80.8 51.3L89.1 51.2L90.1 50.6L82.2 50.7Z"/><path d="M83.4 50.1L91.1 50.0L92.0 49.4L84.6 49.6Z"/><path d="M85.7 49.1L92.9 48.9L93.7 48.5L86.7 48.6Z"/><path d="M87.7 48.1L94.4 48.0L95.1 47.6L88.6 47.7Z"/><path d="M89.5 47.3L95.8 47.2L96.4 46.8L90.3 46.9Z"/><path d="M91.0 46.6L97.0 46.5L97.5 46.2L91.7 46.2Z"/><path d="M92.4 45.9L98.0 45.8L98.5 45.5L93.1 45.6Z"/><path d="M-98.0 163.1L-28.7 155.2L2.0 129.8L-50.3 134.6Z"/><path d="M-20.0 116.4L22.1 113.1L36.3 101.4L1.1 103.8Z"/><path d="M16.6 94.6L46.8 92.8L54.9 86.0L28.5 87.5Z"/><path d="M37.9 81.8L61.3 80.7L66.6 76.4L45.5 77.3Z"/><path d="M51.7 73.6L70.9 72.8L74.6 69.7L57.0 70.4Z"/><path d="M61.5 67.7L77.7 67.1L80.5 64.9L65.4 65.4Z"/><path d="M68.8 63.4L82.8 62.9L84.9 61.2L71.7 61.6Z"/><path d="M74.3 60.0L86.8 59.7L88.4 58.3L76.7 58.6Z"/><path d="M78.8 57.4L89.9 57.1L91.3 56.0L80.7 56.2Z"/><path d="M82.4 55.2L92.5 55.0L93.6 54.0L84.0 54.2Z"/><path d="M85.4 53.4L94.6 53.2L95.6 52.4L86.8 52.6Z"/><path d="M88.0 51.9L96.4 51.7L97.2 51.0L89.1 51.2Z"/><path d="M90.1 50.6L98.0 50.4L98.6 49.9L91.1 50.0Z"/><path d="M92.0 49.4L99.3 49.3L99.9 48.8L92.9 48.9Z"/><path d="M93.7 48.5L100.5 48.4L101.0 47.9L94.4 48.0Z"/><path d="M95.1 47.6L101.5 47.5L102.0 47.1L95.8 47.2Z"/><path d="M96.4 46.8L102.4 46.8L102.8 46.4L97.0 46.5Z"/><path d="M97.5 46.2L103.2 46.1L103.6 45.8L98.0 45.8Z"/><path d="M98.5 45.5L104.0 45.5L104.3 45.2L99.0 45.3Z"/><path d="M-81.8 199.1L4.0 186.3L32.5 148.2L-28.7 155.2Z"/><path d="M2.0 129.8L49.6 125.3L60.9 110.1L22.1 113.1Z"/><path d="M36.3 101.4L69.1 99.2L75.2 91.1L46.8 92.8Z"/><path d="M54.9 86.0L79.9 84.7L83.7 79.6L61.3 80.7Z"/><path d="M66.6 76.4L86.8 75.5L89.4 72.0L70.9 72.8Z"/><path d="M74.6 69.7L91.6 69.1L93.5 66.6L77.7 67.1Z"/><path d="M80.5 64.9L95.1 64.4L96.5 62.5L82.8 62.9Z"/><path d="M84.9 61.2L97.8 60.8L98.9 59.3L86.8 59.7Z"/><path d="M88.4 58.3L99.9 58.0L100.8 56.8L89.9 57.1Z"/><path d="M91.3 56.0L101.6 55.7L102.3 54.7L92.5 55.0Z"/><path d="M93.6 54.0L103.0 53.8L103.6 53.0L94.6 53.2Z"/><path d="M95.6 52.4L104.2 52.2L104.7 51.5L96.4 51.7Z"/><path d="M97.2 51.0L105.2 50.9L105.6 50.3L98.0 50.4Z"/><path d="M98.6 49.9L106.1 49.7L106.5 49.2L99.3 49.3Z"/><path d="M99.9 48.8L106.8 48.7L107.2 48.3L100.5 48.4Z"/><path d="M101.0 47.9L107.5 47.8L107.8 47.4L101.5 47.5Z"/><path d="M102.0 47.1L108.1 47.0L108.4 46.7L102.4 46.8Z"/><path d="M102.8 46.4L108.6 46.3L108.9 46.0L103.2 46.1Z"/><path d="M103.6 45.8L109.1 45.7L109.3 45.4L104.0 45.5Z"/><path d="M-53.1 262.7L59.3 239.0L77.4 175.4L4.0 186.3Z"/><path d="M32.5 148.2L87.0 142.0L92.9 121.3L49.6 125.3Z"/><path d="M60.9 110.1L96.9 107.3L99.8 97.1L69.1 99.2Z"/><path d="M75.2 91.1L102.0 89.5L103.7 83.4L79.9 84.7Z"/><path d="M83.7 79.6L105.1 78.6L106.2 74.6L86.8 75.5Z"/><path d="M89.4 72.0L107.2 71.3L108.0 68.5L91.6 69.1Z"/><path d="M93.5 66.6L108.7 66.1L109.3 64.0L95.1 64.4Z"/><path d="M96.5 62.5L109.8 62.1L110.3 60.5L97.8 60.8Z"/><path d="M98.9 59.3L110.7 59.0L111.0 57.7L99.9 58.0Z"/><path d="M100.8 56.8L111.4 56.6L111.7 55.5L101.6 55.7Z"/><path d="M102.3 54.7L112.0 54.5L112.2 53.6L103.0 53.8Z"/><path d="M103.6 53.0L112.4 52.8L112.7 52.1L104.2 52.2Z"/><path d="M104.7 51.5L112.9 51.4L113.0 50.8L105.2 50.9Z"/><path d="M105.6 50.3L113.2 50.2L113.4 49.6L106.1 49.7Z"/><path d="M106.5 49.2L113.5 49.1L113.7 48.6L106.8 48.7Z"/><path d="M107.2 48.3L113.8 48.2L113.9 47.7L107.5 47.8Z"/><path d="M107.8 47.4L114.0 47.3L114.1 46.9L108.1 47.0Z"/><path d="M108.4 46.7L114.2 46.6L114.3 46.3L108.6 46.3Z"/><path d="M108.9 46.0L114.4 45.9L114.5 45.6L109.1 45.7Z"/><path d="M77.4 175.4L141.1 166.0L135.9 136.4L87.0 142.0Z"/><path d="M92.9 121.3L132.6 117.6L130.3 104.7L96.9 107.3Z"/><path d="M99.8 97.1L128.6 95.2L127.3 87.9L102.0 89.5Z"/><path d="M103.7 83.4L126.3 82.2L125.5 77.6L105.1 78.6Z"/><path d="M106.2 74.6L124.8 73.8L124.3 70.6L107.2 71.3Z"/><path d="M108.0 68.5L123.8 67.9L123.4 65.6L108.7 66.1Z"/><path d="M109.3 64.0L123.0 63.5L122.7 61.7L109.8 62.1Z"/><path d="M110.3 60.5L122.4 60.1L122.2 58.7L110.7 59.0Z"/><path d="M111.0 57.7L122.0 57.4L121.8 56.3L111.4 56.6Z"/><path d="M111.7 55.5L121.6 55.3L121.4 54.3L112.0 54.5Z"/><path d="M112.2 53.6L121.3 53.4L121.1 52.7L112.4 52.8Z"/><path d="M112.7 52.1L121.0 51.9L120.9 51.2L112.9 51.4Z"/><path d="M113.0 50.8L120.8 50.6L120.7 50.0L113.2 50.2Z"/><path d="M113.4 49.6L120.6 49.5L120.5 49.0L113.5 49.1Z"/><path d="M113.7 48.6L120.4 48.5L120.3 48.1L113.8 48.2Z"/><path d="M113.9 47.7L120.2 47.6L120.2 47.2L114.0 47.3Z"/><path d="M114.1 46.9L120.1 46.9L120.0 46.5L114.2 46.6Z"/><path d="M114.3 46.3L120.0 46.2L119.9 45.9L114.4 45.9Z"/><path d="M114.5 45.6L119.9 45.6L119.8 45.3L114.6 45.3Z"/><path d="M150.5 219.7L226.1 203.8L196.8 157.7L141.1 166.0Z"/><path d="M135.9 136.4L179.9 131.3L169.0 114.2L132.6 117.6Z"/><path d="M130.3 104.7L161.3 102.2L155.7 93.3L128.6 95.2Z"/><path d="M127.3 87.9L151.3 86.5L147.9 81.1L126.3 82.2Z"/><path d="M125.5 77.6L145.1 76.7L142.7 73.0L124.8 73.8Z"/><path d="M124.3 70.6L140.8 70.0L139.1 67.3L123.8 67.9Z"/><path d="M123.4 65.6L137.6 65.1L136.4 63.1L123.0 63.5Z"/><path d="M122.7 61.7L135.3 61.3L134.3 59.8L122.4 60.1Z"/><path d="M122.2 58.7L133.4 58.4L132.6 57.2L122.0 57.4Z"/><path d="M121.8 56.3L131.9 56.0L131.2 55.0L121.6 55.3Z"/><path d="M121.4 54.3L130.7 54.1L130.1 53.3L121.3 53.4Z"/><path d="M121.1 52.7L129.6 52.5L129.2 51.8L121.0 51.9Z"/><path d="M120.9 51.2L128.7 51.1L128.3 50.5L120.8 50.6Z"/><path d="M120.7 50.0L128.0 49.9L127.6 49.4L120.6 49.5Z"/><path d="M120.5 49.0L127.3 48.9L127.0 48.4L120.4 48.5Z"/><path d="M120.3 48.1L126.7 48.0L126.5 47.5L120.2 47.6Z"/><path d="M120.2 47.2L126.2 47.2L126.0 46.8L120.1 46.9Z"/><path d="M120.0 46.5L125.8 46.4L125.5 46.1L120.0 46.2Z"/><path d="M119.9 45.9L125.3 45.8L125.2 45.5L119.9 45.6Z"/><path d="M290.3 304.4L379.4 271.8L289.8 190.3L226.1 203.8Z"/><path d="M196.8 157.7L245.9 150.4L219.8 126.8L179.9 131.3Z"/><path d="M169.0 114.2L202.6 111.1L190.3 99.9L161.3 102.2Z"/><path d="M155.7 93.3L181.2 91.6L174.1 85.1L151.3 86.5Z"/><path d="M147.9 81.1L168.4 80.0L163.8 75.8L145.1 76.7Z"/><path d="M142.7 73.0L159.9 72.3L156.7 69.3L140.8 70.0Z"/><path d="M139.1 67.3L153.9 66.8L151.5 64.6L137.6 65.1Z"/><path d="M136.4 63.1L149.3 62.7L147.5 61.0L135.3 61.3Z"/><path d="M134.3 59.8L145.8 59.5L144.3 58.1L133.4 58.4Z"/><path d="M132.6 57.2L143.0 56.9L141.8 55.8L131.9 56.0Z"/><path d="M131.2 55.0L140.7 54.8L139.7 53.9L130.7 54.1Z"/><path d="M130.1 53.3L138.8 53.1L138.0 52.3L129.6 52.5Z"/><path d="M129.2 51.8L137.2 51.6L136.5 50.9L128.7 51.1Z"/><path d="M128.3 50.5L135.8 50.3L135.2 49.8L128.0 49.9Z"/><path d="M127.6 49.4L134.6 49.2L134.1 48.8L127.3 48.9Z"/><path d="M127.0 48.4L133.5 48.3L133.1 47.9L126.7 48.0Z"/><path d="M126.5 47.5L132.6 47.4L132.2 47.1L126.2 47.2Z"/><path d="M126.0 46.8L131.8 46.7L131.4 46.4L125.8 46.4Z"/><path d="M125.5 46.1L131.1 46.0L130.7 45.7L125.3 45.8Z"/><path d="M125.2 45.5L130.4 45.4L130.1 45.1L125.0 45.2Z"/><path d="M289.8 190.3L344.1 178.9L289.5 143.9L245.9 150.4Z"/><path d="M219.8 126.8L256.2 122.6L233.7 108.2L202.6 111.1Z"/><path d="M190.3 99.9L217.5 97.8L205.2 90.0L181.2 91.6Z"/><path d="M174.1 85.1L195.7 83.9L188.0 78.9L168.4 80.0Z"/><path d="M163.8 75.8L181.7 74.9L176.5 71.5L159.9 72.3Z"/><path d="M156.7 69.3L172.0 68.7L168.2 66.2L153.9 66.8Z"/><path d="M151.5 64.6L164.8 64.1L161.9 62.2L149.3 62.7Z"/><path d="M147.5 61.0L159.4 60.6L157.1 59.1L145.8 59.5Z"/><path d="M144.3 58.1L155.0 57.8L153.2 56.6L143.0 56.9Z"/><path d="M141.8 55.8L151.5 55.6L150.0 54.6L140.7 54.8Z"/><path d="M139.7 53.9L148.6 53.7L147.3 52.9L138.8 53.1Z"/><path d="M138.0 52.3L146.2 52.1L145.1 51.4L137.2 51.6Z"/><path d="M136.5 50.9L144.1 50.8L143.1 50.2L135.8 50.3Z"/><path d="M135.2 49.8L142.3 49.6L141.5 49.1L134.6 49.2Z"/><path d="M134.1 48.8L140.7 48.6L140.0 48.2L133.5 48.3Z"/><path d="M133.1 47.9L139.3 47.8L138.7 47.4L132.6 47.4Z"/><path d="M132.2 47.1L138.1 47.0L137.5 46.6L131.8 46.7Z"/><path d="M131.4 46.4L137.0 46.3L136.5 46.0L131.1 46.0Z"/><path d="M130.7 45.7L136.0 45.7L135.6 45.4L130.4 45.4Z"/><path d="M289.5 143.9L328.6 138.1L289.4 118.8L256.2 122.6Z"/><path d="M233.7 108.2L262.5 105.5L242.9 95.8L217.5 97.8Z"/><path d="M205.2 90.0L228.0 88.4L216.2 82.6L195.7 83.9Z"/><path d="M188.0 78.9L206.8 77.9L198.9 74.1L181.7 74.9Z"/><path d="M176.5 71.5L192.4 70.8L186.8 68.1L172.0 68.7Z"/><path d="M168.2 66.2L182.0 65.7L177.8 63.7L164.8 64.1Z"/><path d="M161.9 62.2L174.2 61.8L170.9 60.2L159.4 60.6Z"/><path d="M157.1 59.1L168.0 58.8L165.5 57.5L155.0 57.8Z"/><path d="M153.2 56.6L163.1 56.4L161.0 55.3L151.5 55.6Z"/><path d="M150.0 54.6L159.1 54.4L157.3 53.5L148.6 53.7Z"/><path d="M147.3 52.9L155.7 52.7L154.2 52.0L146.2 52.1Z"/><path d="M145.1 51.4L152.8 51.3L151.5 50.7L144.1 50.8Z"/><path d="M143.1 50.2L150.3 50.1L149.2 49.5L142.3 49.6Z"/><path d="M141.5 49.1L148.2 49.0L147.2 48.5L140.7 48.6Z"/><path d="M140.0 48.2L146.3 48.1L145.5 47.7L139.3 47.8Z"/><path d="M138.7 47.4L144.7 47.3L143.9 46.9L138.1 47.0Z"/><path d="M137.5 46.6L143.2 46.5L142.5 46.2L137.0 46.3Z"/><path d="M136.5 46.0L141.9 45.9L141.3 45.6L136.0 45.7Z"/><path d="M289.4 118.8L319.9 115.3L289.3 103.0L262.5 105.5Z"/><path d="M242.9 95.8L266.8 93.9L249.5 87.0L228.0 88.4Z"/><path d="M216.2 82.6L235.8 81.5L224.7 77.0L206.8 77.9Z"/><path d="M198.9 74.1L215.5 73.3L207.7 70.2L192.4 70.8Z"/><path d="M186.8 68.1L201.1 67.5L195.4 65.2L182.0 65.7Z"/><path d="M177.8 63.7L190.4 63.2L186.1 61.5L174.2 61.8Z"/><path d="M170.9 60.2L182.2 59.9L178.7 58.5L168.0 58.8Z"/><path d="M165.5 57.5L175.6 57.3L172.8 56.1L163.1 56.4Z"/><path d="M161.0 55.3L170.3 55.1L168.0 54.2L159.1 54.4Z"/><path d="M157.3 53.5L165.8 53.3L163.9 52.5L155.7 52.7Z"/><path d="M154.2 52.0L162.1 51.8L160.4 51.1L152.8 51.3Z"/><path d="M151.5 50.7L158.9 50.5L157.5 49.9L150.3 50.1Z"/><path d="M149.2 49.5L156.1 49.4L154.9 48.9L148.2 49.0Z"/><path d="M147.2 48.5L153.7 48.4L152.6 48.0L146.3 48.1Z"/><path d="M145.5 47.7L151.6 47.6L150.6 47.2L144.7 47.3Z"/><path d="M143.9 46.9L149.7 46.8L148.8 46.5L143.2 46.5Z"/><path d="M142.5 46.2L148.0 46.1L147.2 45.8L141.9 45.9Z"/><path d="M141.3 45.6L146.4 45.5L145.7 45.2L140.7 45.3Z"/><path d="M363.7 132.9L395.5 128.2L348.0 112.1L319.9 115.3Z"/><path d="M289.3 103.0L314.3 100.7L289.3 92.2L266.8 93.9Z"/><path d="M249.5 87.0L269.9 85.6L254.4 80.3L235.8 81.5Z"/><path d="M224.7 77.0L241.8 76.1L231.4 72.5L215.5 73.3Z"/><path d="M207.7 70.2L222.5 69.5L214.9 67.0L201.1 67.5Z"/><path d="M195.4 65.2L208.4 64.7L202.7 62.8L190.4 63.2Z"/><path d="M186.1 61.5L197.6 61.1L193.2 59.6L182.2 59.9Z"/><path d="M178.7 58.5L189.2 58.2L185.6 57.0L175.6 57.3Z"/><path d="M172.8 56.1L182.3 55.9L179.4 54.9L170.3 55.1Z"/><path d="M168.0 54.2L176.7 54.0L174.2 53.1L165.8 53.3Z"/><path d="M163.9 52.5L171.9 52.4L169.8 51.7L162.1 51.8Z"/><path d="M160.4 51.1L167.9 51.0L166.1 50.4L158.9 50.5Z"/><path d="M157.5 49.9L164.4 49.8L162.9 49.3L156.1 49.4Z"/><path d="M154.9 48.9L161.4 48.8L160.0 48.3L153.7 48.4Z"/><path d="M152.6 48.0L158.8 47.9L157.6 47.5L151.6 47.6Z"/><path d="M150.6 47.2L156.4 47.1L155.3 46.7L149.7 46.8Z"/><path d="M148.8 46.5L154.3 46.4L153.4 46.1L148.0 46.1Z"/><path d="M147.2 45.8L152.4 45.7L151.6 45.4L146.4 45.5Z"/><path d="M348.0 112.1L373.9 109.1L337.7 98.5L314.3 100.7Z"/><path d="M289.3 92.2L310.5 90.5L289.2 84.3L269.9 85.6Z"/><path d="M254.4 80.3L272.2 79.3L258.3 75.2L241.8 76.1Z"/><path d="M231.4 72.5L246.6 71.8L236.8 68.9L222.5 69.5Z"/><path d="M214.9 67.0L228.3 66.4L221.0 64.3L208.4 64.7Z"/><path d="M202.7 62.8L214.6 62.4L208.9 60.7L197.6 61.1Z"/><path d="M193.2 59.6L203.9 59.2L199.4 57.9L189.2 58.2Z"/><path d="M185.6 57.0L195.3 56.7L191.6 55.6L182.3 55.9Z"/><path d="M179.4 54.9L188.3 54.7L185.2 53.8L176.7 54.0Z"/><path d="M174.2 53.1L182.4 52.9L179.8 52.2L171.9 52.4Z"/><path d="M169.8 51.7L177.5 51.5L175.3 50.8L167.9 51.0Z"/><path d="M166.1 50.4L173.2 50.2L171.3 49.7L164.4 49.8Z"/><path d="M162.9 49.3L169.5 49.2L167.9 48.7L161.4 48.8Z"/><path d="M160.0 48.3L166.3 48.2L164.8 47.8L158.8 47.9Z"/><path d="M157.6 47.5L163.5 47.4L162.2 47.0L156.4 47.1Z"/><path d="M155.3 46.7L160.9 46.6L159.8 46.3L154.3 46.4Z"/><path d="M153.4 46.1L158.7 46.0L157.6 45.7L152.4 45.7Z"/><path d="M337.7 98.5L359.6 96.5L330.5 88.9L310.5 90.5Z"/><path d="M289.2 84.3L307.6 83.0L289.2 78.3L272.2 79.3Z"/><path d="M258.3 75.2L274.0 74.4L261.3 71.1L246.6 71.8Z"/><path d="M236.8 68.9L250.6 68.3L241.3 65.9L228.3 66.4Z"/><path d="M221.0 64.3L233.2 63.8L226.1 62.0L214.6 62.4Z"/><path d="M208.9 60.7L219.9 60.4L214.3 58.9L203.9 59.2Z"/><path d="M199.4 57.9L209.3 57.6L204.8 56.5L195.3 56.7Z"/><path d="M191.6 55.6L200.7 55.4L197.0 54.5L188.3 54.7Z"/><path d="M185.2 53.8L193.6 53.6L190.5 52.8L182.4 52.9Z"/><path d="M179.8 52.2L187.6 52.0L185.0 51.3L177.5 51.5Z"/><path d="M175.3 50.8L182.5 50.7L180.2 50.1L173.2 50.2Z"/><path d="M171.3 49.7L178.1 49.6L176.1 49.1L169.5 49.2Z"/><path d="M167.9 48.7L174.2 48.6L172.5 48.1L166.3 48.2Z"/><path d="M164.8 47.8L170.8 47.7L169.3 47.3L163.5 47.4Z"/><path d="M162.2 47.0L167.8 46.9L166.5 46.6L160.9 46.6Z"/><path d="M159.8 46.3L165.2 46.2L163.9 45.9L158.7 46.0Z"/><path d="M157.6 45.7L162.8 45.6L161.6 45.3L156.6 45.4Z"/><path d="M330.5 88.9L349.4 87.4L325.1 81.8L307.6 83.0Z"/><path d="M289.2 78.3L305.4 77.3L289.2 73.5L274.0 74.4Z"/><path d="M261.3 71.1L275.5 70.4L263.9 67.7L250.6 68.3Z"/><path d="M241.3 65.9L253.8 65.4L245.1 63.4L233.2 63.8Z"/><path d="M226.1 62.0L237.4 61.6L230.5 60.0L219.9 60.4Z"/><path d="M214.3 58.9L224.5 58.6L219.0 57.4L209.3 57.6Z"/><path d="M204.8 56.5L214.1 56.2L209.6 55.2L200.7 55.4Z"/><path d="M197.0 54.5L205.5 54.2L201.8 53.4L193.6 53.6Z"/><path d="M190.5 52.8L198.4 52.6L195.2 51.9L187.6 52.0Z"/><path d="M185.0 51.3L192.3 51.2L189.6 50.6L182.5 50.7Z"/><path d="M180.2 50.1L187.1 50.0L184.7 49.4L178.1 49.6Z"/><path d="M176.1 49.1L182.6 48.9L180.5 48.5L174.2 48.6Z"/><path d="M172.5 48.1L178.6 48.0L176.8 47.6L170.8 47.7Z"/><path d="M169.3 47.3L175.1 47.2L173.4 46.8L167.8 46.9Z"/><path d="M166.5 46.6L171.9 46.5L170.5 46.2L165.2 46.2Z"/><path d="M163.9 45.9L169.1 45.8L167.8 45.5L162.8 45.6Z"/><path d="M325.1 81.8L341.8 80.7L321.0 76.4L305.4 77.3Z"/><path d="M289.2 73.5L303.7 72.8L289.2 69.7L275.5 70.4Z"/><path d="M263.9 67.7L276.7 67.1L265.9 64.9L253.8 65.4Z"/><path d="M245.1 63.4L256.6 62.9L248.3 61.2L237.4 61.6Z"/><path d="M230.5 60.0L240.9 59.7L234.4 58.3L224.5 58.6Z"/><path d="M219.0 57.4L228.5 57.1L223.1 56.0L214.1 56.2Z"/><path d="M209.6 55.2L218.3 55.0L213.9 54.0L205.5 54.2Z"/><path d="M201.8 53.4L209.9 53.2L206.1 52.4L198.4 52.6Z"/><path d="M195.2 51.9L202.7 51.7L199.5 51.0L192.3 51.2Z"/><path d="M189.6 50.6L196.6 50.4L193.9 49.9L187.1 50.0Z"/><path d="M184.7 49.4L191.3 49.3L188.9 48.8L182.6 48.9Z"/><path d="M180.5 48.5L186.7 48.4L184.6 47.9L178.6 48.0Z"/><path d="M176.8 47.6L182.6 47.5L180.7 47.1L175.1 47.2Z"/><path d="M173.4 46.8L179.0 46.8L177.3 46.4L171.9 46.5Z"/><path d="M170.5 46.2L175.7 46.1L174.2 45.8L169.1 45.8Z"/><path d="M167.8 45.5L172.8 45.5L171.5 45.2L166.6 45.3Z"/><path d="M321.0 76.4L335.9 75.5L317.7 72.0L303.7 72.8Z"/><path d="M289.2 69.7L302.3 69.1L289.1 66.6L276.7 67.1Z"/><path d="M265.9 64.9L277.7 64.4L267.7 62.5L256.6 62.9Z"/><path d="M248.3 61.2L258.9 60.8L251.1 59.3L240.9 59.7Z"/><path d="M234.4 58.3L244.0 58.0L237.7 56.8L228.5 57.1Z"/><path d="M223.1 56.0L232.0 55.7L226.8 54.7L218.3 55.0Z"/><path d="M213.9 54.0L222.1 53.8L217.7 53.0L209.9 53.2Z"/><path d="M206.1 52.4L213.7 52.2L210.1 51.5L202.7 51.7Z"/><path d="M199.5 51.0L206.6 50.9L203.5 50.3L196.6 50.4Z"/><path d="M193.9 49.9L200.5 49.7L197.8 49.2L191.3 49.3Z"/><path d="M188.9 48.8L195.2 48.7L192.8 48.3L186.7 48.4Z"/><path d="M184.6 47.9L190.5 47.8L188.4 47.4L182.6 47.5Z"/><path d="M180.7 47.1L186.3 47.0L184.4 46.7L179.0 46.8Z"/><path d="M177.3 46.4L182.6 46.3L180.9 46.0L175.7 46.1Z"/><path d="M174.2 45.8L179.3 45.7L177.8 45.4L172.8 45.5Z"/><path d="M317.7 72.0L331.2 71.3L315.0 68.5L302.3 69.1Z"/><path d="M289.1 66.6L301.2 66.1L289.1 64.0L277.7 64.4Z"/><path d="M267.7 62.5L278.6 62.1L269.2 60.5L258.9 60.8Z"/><path d="M251.1 59.3L260.9 59.0L253.5 57.7L244.0 58.0Z"/><path d="M237.7 56.8L246.8 56.6L240.7 55.5L232.0 55.7Z"/><path d="M226.8 54.7L235.2 54.5L230.1 53.6L222.1 53.8Z"/><path d="M217.7 53.0L225.5 52.8L221.2 52.1L213.7 52.2Z"/><path d="M210.1 51.5L217.3 51.4L213.6 50.8L206.6 50.9Z"/><path d="M203.5 50.3L210.2 50.2L207.1 49.6L200.5 49.7Z"/><path d="M197.8 49.2L204.1 49.1L201.4 48.6L195.2 48.7Z"/><path d="M192.8 48.3L198.8 48.2L196.3 47.7L190.5 47.8Z"/><path d="M188.4 47.4L194.0 47.3L191.9 46.9L186.3 47.0Z"/><path d="M184.4 46.7L189.8 46.6L187.9 46.3L182.6 46.3Z"/><path d="M180.9 46.0L186.1 45.9L184.3 45.6L179.3 45.7Z"/><path d="M315.0 68.5L327.3 67.9L312.8 65.6L301.2 66.1Z"/><path d="M289.1 64.0L300.2 63.5L289.1 61.7L278.6 62.1Z"/><path d="M269.2 60.5L279.3 60.1L270.6 58.7L260.9 59.0Z"/><path d="M253.5 57.7L262.7 57.4L255.6 56.3L246.8 56.6Z"/><path d="M240.7 55.5L249.2 55.3L243.4 54.3L235.2 54.5Z"/><path d="M230.1 53.6L238.0 53.4L233.1 52.7L225.5 52.8Z"/><path d="M221.2 52.1L228.6 51.9L224.4 51.2L217.3 51.4Z"/><path d="M213.6 50.8L220.5 50.6L216.9 50.0L210.2 50.2Z"/><path d="M207.1 49.6L213.5 49.5L210.4 49.0L204.1 49.1Z"/><path d="M201.4 48.6L207.4 48.5L204.7 48.1L198.8 48.2Z"/><path d="M196.3 47.7L202.1 47.6L199.6 47.2L194.0 47.3Z"/><path d="M191.9 46.9L197.3 46.9L195.1 46.5L189.8 46.6Z"/><path d="M187.9 46.3L193.1 46.2L191.1 45.9L186.1 45.9Z"/><path d="M184.3 45.6L189.3 45.6L187.5 45.3L182.7 45.3Z"/><path d="M344.1 70.6L356.6 69.9L339.2 67.3L327.3 67.9Z"/><path d="M312.8 65.6L324.1 65.1L310.9 63.1L300.2 63.5Z"/><path d="M289.1 61.7L299.4 61.3L289.1 59.8L279.3 60.1Z"/><path d="M270.6 58.7L279.9 58.4L271.7 57.2L262.7 57.4Z"/><path d="M255.6 56.3L264.3 56.0L257.5 55.0L249.2 55.3Z"/><path d="M243.4 54.3L251.4 54.1L245.7 53.3L238.0 53.4Z"/><path d="M233.1 52.7L240.5 52.5L235.8 51.8L228.6 51.9Z"/><path d="M224.4 51.2L231.3 51.1L227.2 50.5L220.5 50.6Z"/><path d="M216.9 50.0L223.4 49.9L219.9 49.4L213.5 49.5Z"/><path d="M210.4 49.0L216.5 48.9L213.4 48.4L207.4 48.5Z"/><path d="M204.7 48.1L210.5 48.0L207.8 47.5L202.1 47.6Z"/><path d="M199.6 47.2L205.2 47.1L202.7 46.8L197.3 46.9Z"/><path d="M195.1 46.5L200.4 46.4L198.2 46.1L193.1 46.2Z"/><path d="M191.1 45.9L196.1 45.8L194.2 45.5L189.3 45.6Z"/><path d="M339.2 67.3L350.6 66.8L335.0 64.6L324.1 65.1Z"/><path d="M310.9 63.1L321.4 62.7L309.3 61.0L299.4 61.3Z"/><path d="M289.1 59.8L298.7 59.5L289.1 58.1L279.9 58.4Z"/><path d="M271.7 57.2L280.5 56.9L272.7 55.8L264.3 56.0Z"/><path d="M257.5 55.0L265.7 54.8L259.2 53.9L251.4 54.1Z"/><path d="M245.7 53.3L253.3 53.1L247.9 52.3L240.5 52.5Z"/><path d="M235.8 51.8L242.8 51.6L238.2 50.9L231.3 51.1Z"/><path d="M227.2 50.5L233.9 50.3L229.9 49.8L223.4 49.9Z"/><path d="M219.9 49.4L226.1 49.2L222.6 48.8L216.5 48.9Z"/><path d="M213.4 48.4L219.3 48.3L216.3 47.9L210.5 48.0Z"/><path d="M207.8 47.5L213.4 47.4L210.6 47.1L205.2 47.1Z"/><path d="M202.7 46.8L208.0 46.7L205.6 46.4L200.4 46.4Z"/><path d="M198.2 46.1L203.3 46.0L201.1 45.7L196.1 45.8Z"/><path d="M194.2 45.5L199.0 45.4L197.0 45.1L192.3 45.2Z"/><path d="M335.0 64.6L345.6 64.1L331.5 62.2L321.4 62.7Z"/><path d="M309.3 61.0L319.0 60.6L308.0 59.1L298.7 59.5Z"/><path d="M289.1 58.1L298.0 57.8L289.1 56.6L280.5 56.9Z"/><path d="M272.7 55.8L281.0 55.6L273.6 54.6L265.7 54.8Z"/><path d="M259.2 53.9L266.9 53.7L260.7 52.9L253.3 53.1Z"/><path d="M247.9 52.3L255.0 52.1L249.8 51.4L242.8 51.6Z"/><path d="M238.2 50.9L244.9 50.8L240.4 50.2L233.9 50.3Z"/><path d="M229.9 49.8L236.2 49.6L232.3 49.1L226.1 49.2Z"/><path d="M222.6 48.8L228.6 48.6L225.2 48.2L219.3 48.3Z"/><path d="M216.3 47.9L221.9 47.8L218.9 47.4L213.4 47.4Z"/><path d="M210.6 47.1L216.0 47.0L213.3 46.6L208.0 46.7Z"/><path d="M205.6 46.4L210.7 46.3L208.3 46.0L203.3 46.0Z"/><path d="M201.1 45.7L206.0 45.7L203.8 45.4L199.0 45.4Z"/><path d="M331.5 62.2L341.4 61.8L328.5 60.2L319.0 60.6Z"/><path d="M308.0 59.1L317.0 58.8L306.8 57.5L298.0 57.8Z"/><path d="M289.1 56.6L297.5 56.4L289.1 55.3L281.0 55.6Z"/><path d="M273.6 54.6L281.4 54.4L274.4 53.5L266.9 53.7Z"/><path d="M260.7 52.9L268.0 52.7L262.1 52.0L255.0 52.1Z"/><path d="M249.8 51.4L256.6 51.3L251.6 50.7L244.9 50.8Z"/><path d="M240.4 50.2L246.8 50.1L242.5 49.5L236.2 49.6Z"/><path d="M232.3 49.1L238.3 49.0L234.5 48.5L228.6 48.6Z"/><path d="M225.2 48.2L230.9 48.1L227.5 47.7L221.9 47.8Z"/><path d="M218.9 47.4L224.3 47.3L221.3 46.9L216.0 47.0Z"/><path d="M213.3 46.6L218.5 46.5L215.8 46.2L210.7 46.3Z"/><path d="M208.3 46.0L213.2 45.9L210.8 45.6L206.0 45.7Z"/><path d="M328.5 60.2L337.7 59.9L325.9 58.5L317.0 58.8Z"/><path d="M306.8 57.5L315.3 57.3L305.7 56.1L297.5 56.4Z"/><path d="M289.1 55.3L297.0 55.1L289.1 54.2L281.4 54.4Z"/><path d="M274.4 53.5L281.8 53.3L275.2 52.5L268.0 52.7Z"/><path d="M262.1 52.0L269.0 51.8L263.3 51.1L256.6 51.3Z"/><path d="M251.6 50.7L258.1 50.5L253.2 49.9L246.8 50.1Z"/><path d="M242.5 49.5L248.6 49.4L244.3 48.9L238.3 49.0Z"/><path d="M234.5 48.5L240.3 48.4L236.6 48.0L230.9 48.1Z"/><path d="M227.5 47.7L233.0 47.6L229.7 47.2L224.3 47.3Z"/><path d="M221.3 46.9L226.6 46.8L223.6 46.5L218.5 46.5Z"/><path d="M215.8 46.2L220.8 46.1L218.1 45.8L213.2 45.9Z"/><path d="M210.8 45.6L215.6 45.5L213.2 45.2L208.5 45.3Z"/><path d="M325.9 58.5L334.5 58.2L323.6 57.0L315.3 57.3Z"/><path d="M305.7 56.1L313.7 55.9L304.7 54.9L297.0 55.1Z"/><path d="M289.1 54.2L296.6 54.0L289.1 53.1L281.8 53.3Z"/><path d="M275.2 52.5L282.2 52.4L275.8 51.7L269.0 51.8Z"/><path d="M263.3 51.1L269.9 51.0L264.5 50.4L258.1 50.5Z"/><path d="M253.2 49.9L259.4 49.8L254.6 49.3L248.6 49.4Z"/><path d="M244.3 48.9L250.2 48.8L246.0 48.3L240.3 48.4Z"/><path d="M236.6 48.0L242.1 47.9L238.5 47.5L233.0 47.6Z"/><path d="M229.7 47.2L235.0 47.1L231.7 46.7L226.6 46.8Z"/><path d="M223.6 46.5L228.6 46.4L225.7 46.1L220.8 46.1Z"/><path d="M218.1 45.8L222.9 45.7L220.3 45.4L215.6 45.5Z"/><path d="M323.6 57.0L331.7 56.7L321.6 55.6L313.7 55.9Z"/><path d="M304.7 54.9L312.3 54.7L303.9 53.8L296.6 54.0Z"/><path d="M289.1 53.1L296.2 52.9L289.1 52.2L282.2 52.4Z"/><path d="M275.8 51.7L282.5 51.5L276.4 50.8L269.9 51.0Z"/><path d="M264.5 50.4L270.8 50.2L265.5 49.7L259.4 49.8Z"/><path d="M254.6 49.3L260.6 49.2L256.0 48.7L250.2 48.8Z"/><path d="M246.0 48.3L251.7 48.2L247.6 47.8L242.1 47.9Z"/><path d="M238.5 47.5L243.8 47.4L240.2 47.0L235.0 47.1Z"/><path d="M231.7 46.7L236.8 46.6L233.6 46.3L228.6 46.4Z"/><path d="M225.7 46.1L230.6 46.0L227.7 45.7L222.9 45.7Z"/><path d="M321.6 55.6L329.2 55.4L319.8 54.5L312.3 54.7Z"/><path d="M303.9 53.8L311.1 53.6L303.2 52.8L296.2 52.9Z"/><path d="M289.1 52.2L295.8 52.0L289.1 51.3L282.5 51.5Z"/><path d="M276.4 50.8L282.8 50.7L277.0 50.1L270.8 50.2Z"/><path d="M265.5 49.7L271.5 49.6L266.5 49.1L260.6 49.2Z"/><path d="M256.0 48.7L261.7 48.6L257.3 48.1L251.7 48.2Z"/><path d="M247.6 47.8L253.1 47.7L249.1 47.3L243.8 47.4Z"/><path d="M240.2 47.0L245.4 46.9L241.9 46.6L236.8 46.6Z"/><path d="M233.6 46.3L238.6 46.2L235.4 45.9L230.6 46.0Z"/><path d="M227.7 45.7L232.4 45.6L229.6 45.3L225.0 45.4Z"/><path d="M319.8 54.5L327.0 54.2L318.2 53.4L311.1 53.6Z"/><path d="M303.2 52.8L310.0 52.6L302.5 51.9L295.8 52.0Z"/><path d="M289.1 51.3L295.5 51.2L289.1 50.6L282.8 50.7Z"/><path d="M277.0 50.1L283.1 50.0L277.5 49.4L271.5 49.6Z"/><path d="M266.5 49.1L272.2 48.9L267.3 48.5L261.7 48.6Z"/><path d="M257.3 48.1L262.7 48.0L258.4 47.6L253.1 47.7Z"/><path d="M249.1 47.3L254.4 47.2L250.5 46.8L245.4 46.9Z"/><path d="M241.9 46.6L246.9 46.5L243.4 46.2L238.6 46.2Z"/><path d="M235.4 45.9L240.2 45.8L237.1 45.5L232.4 45.6Z"/><path d="M336.8 55.2L344.1 55.0L334.2 54.0L327.0 54.2Z"/><path d="M318.2 53.4L325.1 53.2L316.7 52.4L310.0 52.6Z"/><path d="M302.5 51.9L309.0 51.7L301.8 51.0L295.5 51.2Z"/><path d="M289.1 50.6L295.2 50.4L289.1 49.9L283.1 50.0Z"/><path d="M277.5 49.4L283.3 49.3L277.9 48.8L272.2 48.9Z"/><path d="M267.3 48.5L272.9 48.4L268.2 47.9L262.7 48.0Z"/><path d="M258.4 47.6L263.7 47.5L259.5 47.1L254.4 47.2Z"/><path d="M250.5 46.8L255.5 46.8L251.8 46.4L246.9 46.5Z"/><path d="M243.4 46.2L248.2 46.1L244.9 45.8L240.2 45.8Z"/><path d="M237.1 45.5L241.7 45.5L238.7 45.2L234.1 45.3Z"/><path d="M334.2 54.0L341.2 53.8L331.9 53.0L325.1 53.2Z"/><path d="M316.7 52.4L323.3 52.2L315.4 51.5L309.0 51.7Z"/><path d="M301.8 51.0L308.1 50.9L301.3 50.3L295.2 50.4Z"/><path d="M289.1 49.9L295.0 49.7L289.1 49.2L283.3 49.3Z"/><path d="M277.9 48.8L283.5 48.7L278.3 48.3L272.9 48.4Z"/><path d="M268.2 47.9L273.5 47.8L268.9 47.4L263.7 47.5Z"/><path d="M259.5 47.1L264.6 47.0L260.5 46.7L255.5 46.8Z"/><path d="M251.8 46.4L256.7 46.3L253.0 46.0L248.2 46.1Z"/><path d="M244.9 45.8L249.5 45.7L246.2 45.4L241.7 45.5Z"/><path d="M331.9 53.0L338.5 52.8L329.8 52.1L323.3 52.2Z"/><path d="M315.4 51.5L321.7 51.4L314.2 50.8L308.1 50.9Z"/><path d="M301.3 50.3L307.2 50.2L300.8 49.6L295.0 49.7Z"/><path d="M289.1 49.2L294.7 49.1L289.0 48.6L283.5 48.7Z"/><path d="M278.3 48.3L283.7 48.2L278.7 47.7L273.5 47.8Z"/><path d="M268.9 47.4L274.0 47.3L269.6 46.9L264.6 47.0Z"/><path d="M260.5 46.7L265.4 46.6L261.5 46.3L256.7 46.3Z"/><path d="M253.0 46.0L257.7 45.9L254.1 45.6L249.5 45.7Z"/><path d="M329.8 52.1L336.1 51.9L327.9 51.2L321.7 51.4Z"/><path d="M314.2 50.8L320.2 50.6L313.1 50.0L307.2 50.2Z"/><path d="M300.8 49.6L306.5 49.5L300.3 49.0L294.7 49.1Z"/><path d="M289.0 48.6L294.5 48.5L289.0 48.1L283.7 48.2Z"/><path d="M278.7 47.7L283.9 47.6L279.1 47.2L274.0 47.3Z"/><path d="M269.6 46.9L274.6 46.9L270.3 46.5L265.4 46.6Z"/><path d="M261.5 46.3L266.2 46.2L262.3 45.9L257.7 45.9Z"/><path d="M254.1 45.6L258.7 45.6L255.2 45.3L250.7 45.3Z"/><path d="M327.9 51.2L333.9 51.1L326.1 50.5L320.2 50.6Z"/><path d="M313.1 50.0L318.9 49.9L312.1 49.4L306.5 49.5Z"/><path d="M300.3 49.0L305.8 48.9L299.8 48.4L294.5 48.5Z"/><path d="M289.0 48.1L294.3 48.0L289.0 47.5L283.9 47.6Z"/><path d="M279.1 47.2L284.1 47.1L279.4 46.8L274.6 46.9Z"/><path d="M270.3 46.5L275.0 46.4L270.9 46.1L266.2 46.2Z"/><path d="M262.3 45.9L266.9 45.8L263.2 45.5L258.7 45.6Z"/><path d="M326.1 50.5L332.0 50.3L324.6 49.8L318.9 49.9Z"/><path d="M312.1 49.4L317.7 49.2L311.2 48.8L305.8 48.9Z"/><path d="M299.8 48.4L305.1 48.3L299.4 47.9L294.3 48.0Z"/><path d="M289.0 47.5L294.1 47.4L289.0 47.1L284.1 47.1Z"/><path d="M279.4 46.8L284.3 46.7L279.8 46.4L275.0 46.4Z"/><path d="M270.9 46.1L275.5 46.0L271.4 45.7L266.9 45.8Z"/><path d="M263.2 45.5L267.6 45.4L263.9 45.1L259.6 45.2Z"/><path d="M324.6 49.8L330.1 49.6L323.1 49.1L317.7 49.2Z"/><path d="M311.2 48.8L316.5 48.6L310.3 48.2L305.1 48.3Z"/><path d="M299.4 47.9L304.5 47.8L299.1 47.4L294.1 47.4Z"/><path d="M289.0 47.1L293.9 47.0L289.0 46.6L284.3 46.7Z"/><path d="M279.8 46.4L284.4 46.3L280.1 46.0L275.5 46.0Z"/><path d="M271.4 45.7L275.9 45.7L272.0 45.4L267.6 45.4Z"/><path d="M323.1 49.1L328.5 49.0L321.8 48.5L316.5 48.6Z"/><path d="M310.3 48.2L315.5 48.1L309.6 47.7L304.5 47.8Z"/><path d="M299.1 47.4L304.0 47.3L298.7 46.9L293.9 47.0Z"/><path d="M289.0 46.6L293.7 46.5L289.0 46.2L284.4 46.3Z"/><path d="M280.1 46.0L284.6 45.9L280.3 45.6L275.9 45.7Z"/><path d="M321.8 48.5L326.9 48.4L320.5 48.0L315.5 48.1Z"/><path d="M309.6 47.7L314.5 47.6L308.8 47.2L304.0 47.3Z"/><path d="M298.7 46.9L303.5 46.8L298.4 46.5L293.7 46.5Z"/><path d="M289.0 46.2L293.6 46.1L289.0 45.8L284.6 45.9Z"/><path d="M280.3 45.6L284.7 45.5L280.6 45.2L276.3 45.3Z"/><path d="M333.8 48.9L339.0 48.8L332.0 48.3L326.9 48.4Z"/><path d="M320.5 48.0L325.5 47.9L319.4 47.5L314.5 47.6Z"/><path d="M308.8 47.2L313.6 47.1L308.1 46.7L303.5 46.8Z"/><path d="M298.4 46.5L303.0 46.4L298.1 46.1L293.6 46.1Z"/><path d="M289.0 45.8L293.4 45.7L289.0 45.4L284.7 45.5Z"/><path d="M332.0 48.3L337.1 48.2L330.4 47.8L325.5 47.9Z"/><path d="M319.4 47.5L324.2 47.4L318.3 47.0L313.6 47.1Z"/><path d="M308.1 46.7L312.8 46.6L307.5 46.3L303.0 46.4Z"/><path d="M298.1 46.1L302.5 46.0L297.8 45.7L293.4 45.7Z"/><path d="M330.4 47.8L335.3 47.7L329.0 47.3L324.2 47.4Z"/><path d="M318.3 47.0L323.0 46.9L317.3 46.6L312.8 46.6Z"/><path d="M307.5 46.3L312.0 46.2L306.9 45.9L302.5 46.0Z"/><path d="M297.8 45.7L302.1 45.6L297.5 45.3L293.3 45.4Z"/><path d="M329.0 47.3L333.6 47.2L327.6 46.8L323.0 46.9Z"/><path d="M317.3 46.6L321.8 46.5L316.4 46.2L312.0 46.2Z"/><path d="M306.9 45.9L311.2 45.8L306.3 45.5L302.1 45.6Z"/><path d="M327.6 46.8L332.1 46.8L326.3 46.4L321.8 46.5Z"/><path d="M316.4 46.2L320.8 46.1L315.5 45.8L311.2 45.8Z"/><path d="M306.3 45.5L310.6 45.5L305.8 45.2L301.7 45.3Z"/><path d="M326.3 46.4L330.7 46.3L325.1 46.0L320.8 46.1Z"/><path d="M315.5 45.8L319.8 45.7L314.7 45.4L310.6 45.5Z"/><path d="M325.1 46.0L329.3 45.9L323.9 45.6L319.8 45.7Z"/><path d="M323.9 45.6L328.1 45.6L322.9 45.3L318.8 45.3Z"/><path d="M332.2 45.5L336.2 45.4L330.9 45.1L326.9 45.2Z"/></g><g mask="url(#m1)"><path d="M-1520.5 434.0L-18.7 67.3M-1497.4 434.0L-16.8 67.3M-1474.3 434.0L-14.9 67.3M-1451.2 434.0L-12.9 67.3M-1428.1 434.0L-11.0 67.3M-1405.0 434.0L-9.1 67.3M-1381.9 434.0L-7.2 67.3M-1358.9 434.0L-5.2 67.3M-1335.8 434.0L-3.3 67.3M-1312.7 434.0L-1.4 67.3M-1289.6 434.0L0.5 67.3M-1266.5 434.0L2.5 67.3M-1243.4 434.0L4.4 67.3M-1220.3 434.0L6.3 67.3M-1197.2 434.0L8.2 67.3M-1174.1 434.0L10.2 67.3M-1151.0 434.0L12.1 67.3M-1127.9 434.0L14.0 67.3M-1104.8 434.0L15.9 67.3M-1081.8 434.0L17.9 67.3M-1058.7 434.0L19.8 67.3M-1035.6 434.0L21.7 67.3M-1012.5 434.0L23.6 67.3M-989.4 434.0L25.6 67.3M-966.3 434.0L27.5 67.3M-943.2 434.0L29.4 67.3M-920.1 434.0L31.3 67.3M-897.0 434.0L33.3 67.3M-873.9 434.0L35.2 67.3M-850.8 434.0L37.1 67.3M-827.7 434.0L39.0 67.3M-804.7 434.0L41.0 67.3M-781.6 434.0L42.9 67.3M-758.5 434.0L44.8 67.3M-735.4 434.0L46.7 67.3M-712.3 434.0L48.7 67.3M-689.2 434.0L50.6 67.3M-666.1 434.0L52.5 67.3M-643.0 434.0L54.4 67.3M-619.9 434.0L56.3 67.3M-596.8 434.0L58.3 67.3M-573.7 434.0L60.2 67.3M-550.6 434.0L62.1 67.3M-527.6 434.0L64.0 67.3M-504.5 434.0L66.0 67.3M-481.4 434.0L67.9 67.3M-458.3 434.0L69.8 67.3M-435.2 434.0L71.7 67.3M-412.1 434.0L73.7 67.3M-389.0 434.0L75.6 67.3M-365.9 434.0L77.5 67.3M-342.8 434.0L79.4 67.3M-319.7 434.0L81.4 67.3M-296.6 434.0L83.3 67.3M-273.5 434.0L85.2 67.3M-250.4 434.0L87.1 67.3M-227.4 434.0L89.1 67.3M-204.3 434.0L91.0 67.3M-181.2 434.0L92.9 67.3M-158.1 434.0L94.8 67.3M-135.0 434.0L96.8 67.3M-111.9 434.0L98.7 67.3M-88.8 434.0L100.6 67.3M-65.7 434.0L102.5 67.3M-42.6 434.0L104.5 67.3M-19.5 434.0L106.4 67.3M3.6 434.0L108.3 67.3M26.7 434.0L110.2 67.3M49.7 434.0L112.2 67.3M72.8 434.0L114.1 67.3M95.9 434.0L116.0 67.3M119.0 434.0L117.9 67.3M142.1 434.0L119.9 67.3M165.2 434.0L121.8 67.3M188.3 434.0L123.7 67.3M211.4 434.0L125.6 67.3M234.5 434.0L127.5 67.3M257.6 434.0L129.5 67.3M280.7 434.0L131.4 67.3M335.7 434.0L972.4 67.3M303.8 434.0L133.3 67.3M235.7 434.0L964.1 67.3M326.8 434.0L135.2 67.3M135.6 434.0L955.7 67.3M349.9 434.0L137.2 67.3M35.6 434.0L947.4 67.3M373.0 434.0L139.1 67.3M-64.4 434.0L939.1 67.3M396.1 434.0L141.0 67.3M-164.4 434.0L930.7 67.3M419.2 434.0L142.9 67.3M-264.4 434.0L922.4 67.3M442.3 434.0L144.9 67.3M-364.5 434.0L914.1 67.3M465.4 434.0L146.8 67.3M-464.5 434.0L905.7 67.3M488.5 434.0L148.7 67.3M-564.5 434.0L897.4 67.3M511.6 434.0L150.6 67.3M-664.5 434.0L889.1 67.3M534.7 434.0L152.6 67.3M-764.5 434.0L880.7 67.3M557.8 434.0L154.5 67.3M-864.6 434.0L872.4 67.3M580.9 434.0L156.4 67.3M-964.6 434.0L864.1 67.3M603.9 434.0L158.3 67.3M-1064.6 434.0L855.7 67.3M627.0 434.0L160.3 67.3M-1164.6 434.0L847.4 67.3M650.1 434.0L162.2 67.3M-1264.7 434.0L839.0 67.3M673.2 434.0L164.1 67.3M-1364.7 434.0L830.7 67.3M696.3 434.0L166.0 67.3M-1464.7 434.0L822.4 67.3M719.4 434.0L168.0 67.3M-1564.7 434.0L814.0 67.3M742.5 434.0L169.9 67.3M-1664.7 434.0L805.7 67.3M765.6 434.0L171.8 67.3M-1764.8 434.0L797.4 67.3M788.7 434.0L173.7 67.3M-1864.8 434.0L789.0 67.3M811.8 434.0L175.7 67.3M-1964.8 434.0L780.7 67.3M834.9 434.0L177.6 67.3M-2064.8 434.0L772.4 67.3M858.0 434.0L179.5 67.3M-2164.9 434.0L764.0 67.3M881.1 434.0L181.4 67.3M-2264.9 434.0L755.7 67.3M904.1 434.0L183.4 67.3M-2364.9 434.0L747.4 67.3M927.2 434.0L185.3 67.3M-2464.9 434.0L739.0 67.3M950.3 434.0L187.2 67.3M-2564.9 434.0L730.7 67.3M973.4 434.0L189.1 67.3M-2665.0 434.0L722.4 67.3M996.5 434.0L191.1 67.3M-2765.0 434.0L714.0 67.3M1019.6 434.0L193.0 67.3M-2865.0 434.0L705.7 67.3M1042.7 434.0L194.9 67.3M-2965.0 434.0L697.4 67.3M1065.8 434.0L196.8 67.3M-3065.0 434.0L689.0 67.3M1088.9 434.0L198.7 67.3M-3165.1 434.0L680.7 67.3M1112.0 434.0L200.7 67.3M-3265.1 434.0L672.3 67.3M1135.1 434.0L202.6 67.3M-3365.1 434.0L664.0 67.3M1158.2 434.0L204.5 67.3M-3465.1 434.0L655.7 67.3M1181.2 434.0L206.4 67.3M-3565.2 434.0L647.3 67.3M1204.3 434.0L208.4 67.3M-3665.2 434.0L639.0 67.3M1227.4 434.0L210.3 67.3M-3765.2 434.0L630.7 67.3M1250.5 434.0L212.2 67.3M-3865.2 434.0L622.3 67.3M1273.6 434.0L214.1 67.3M-3965.2 434.0L614.0 67.3M1296.7 434.0L216.1 67.3M-4065.3 434.0L605.7 67.3M1319.8 434.0L218.0 67.3M-4165.3 434.0L597.3 67.3M1342.9 434.0L219.9 67.3M-4265.3 434.0L589.0 67.3M1366.0 434.0L221.8 67.3M-4365.3 434.0L580.7 67.3M1389.1 434.0L223.8 67.3M-4465.4 434.0L572.3 67.3M1412.2 434.0L225.7 67.3M-4565.4 434.0L564.0 67.3M1435.3 434.0L227.6 67.3M-4665.4 434.0L555.7 67.3M1458.3 434.0L229.5 67.3M-4765.4 434.0L547.3 67.3M1481.4 434.0L231.5 67.3M-4865.4 434.0L539.0 67.3M1504.5 434.0L233.4 67.3M-4965.5 434.0L530.6 67.3M1527.6 434.0L235.3 67.3M-5065.5 434.0L522.3 67.3M1550.7 434.0L237.2 67.3M-5165.5 434.0L514.0 67.3M1573.8 434.0L239.2 67.3M-5265.5 434.0L505.6 67.3M1596.9 434.0L241.1 67.3M-5365.6 434.0L497.3 67.3M1620.0 434.0L243.0 67.3M-5465.6 434.0L489.0 67.3M1643.1 434.0L244.9 67.3M-5565.6 434.0L480.6 67.3M1666.2 434.0L246.9 67.3M-5665.6 434.0L472.3 67.3M1689.3 434.0L248.8 67.3M-5765.6 434.0L464.0 67.3M1712.4 434.0L250.7 67.3M-5865.7 434.0L455.6 67.3M1735.4 434.0L252.6 67.3M-5965.7 434.0L447.3 67.3M1758.5 434.0L254.6 67.3M-6065.7 434.0L439.0 67.3M1781.6 434.0L256.5 67.3M-6165.7 434.0L430.6 67.3M1804.7 434.0L258.4 67.3M-6265.7 434.0L422.3 67.3M1827.8 434.0L260.3 67.3M-6365.8 434.0L414.0 67.3M1850.9 434.0L262.2 67.3M-6465.8 434.0L405.6 67.3M1874.0 434.0L264.2 67.3M-6565.8 434.0L397.3 67.3M1897.1 434.0L266.1 67.3M-6665.8 434.0L389.0 67.3M1920.2 434.0L268.0 67.3M-6765.9 434.0L380.6 67.3M1943.3 434.0L269.9 67.3M-6865.9 434.0L372.3 67.3M1966.4 434.0L271.9 67.3M-6965.9 434.0L363.9 67.3M1989.5 434.0L273.8 67.3M-7065.9 434.0L355.6 67.3M2012.6 434.0L275.7 67.3M-7165.9 434.0L347.3 67.3M2035.6 434.0L277.6 67.3M-7266.0 434.0L338.9 67.3M2058.7 434.0L279.6 67.3M-7366.0 434.0L330.6 67.3M2081.8 434.0L281.5 67.3M-7466.0 434.0L322.3 67.3M2104.9 434.0L283.4 67.3M-7566.0 434.0L313.9 67.3M2128.0 434.0L285.3 67.3M-7666.1 434.0L305.6 67.3M2151.1 434.0L287.3 67.3M-7766.1 434.0L297.3 67.3M2174.2 434.0L289.2 67.3M-7866.1 434.0L288.9 67.3M2197.3 434.0L291.1 67.3M-7966.1 434.0L280.6 67.3M2220.4 434.0L293.0 67.3M-8066.1 434.0L272.3 67.3M2243.5 434.0L295.0 67.3M-8166.2 434.0L263.9 67.3M2266.6 434.0L296.9 67.3M-8266.2 434.0L255.6 67.3M2289.7 434.0L298.8 67.3M-8366.2 434.0L247.3 67.3M2312.7 434.0L300.7 67.3M-8466.2 434.0L238.9 67.3M2335.8 434.0L302.7 67.3M-8566.2 434.0L230.6 67.3M2358.9 434.0L304.6 67.3M-8666.3 434.0L222.2 67.3M2382.0 434.0L306.5 67.3M-8766.3 434.0L213.9 67.3M2405.1 434.0L308.4 67.3M-8866.3 434.0L205.6 67.3M2428.2 434.0L310.4 67.3M-8966.3 434.0L197.2 67.3M2451.3 434.0L312.3 67.3M-9066.4 434.0L188.9 67.3M2474.4 434.0L314.2 67.3M-9166.4 434.0L180.6 67.3M2497.5 434.0L316.1 67.3M-9266.4 434.0L172.2 67.3M2520.6 434.0L318.1 67.3M-9366.4 434.0L163.9 67.3M2543.7 434.0L320.0 67.3M-9466.4 434.0L155.6 67.3M2566.8 434.0L321.9 67.3M-9566.5 434.0L147.2 67.3M2589.8 434.0L323.8 67.3M-9666.5 434.0L138.9 67.3M2612.9 434.0L325.8 67.3M-9766.5 434.0L130.6 67.3M2636.0 434.0L327.7 67.3M-9866.5 434.0L122.2 67.3M2659.1 434.0L329.6 67.3M-9966.6 434.0L113.9 67.3M2682.2 434.0L331.5 67.3M-10066.6 434.0L105.6 67.3M2705.3 434.0L333.4 67.3M-10166.6 434.0L97.2 67.3M2728.4 434.0L335.4 67.3M-10266.6 434.0L88.9 67.3M2751.5 434.0L337.3 67.3M-10366.6 434.0L80.6 67.3M2774.6 434.0L339.2 67.3M-10466.7 434.0L72.2 67.3M2797.7 434.0L341.1 67.3M-10566.7 434.0L63.9 67.3M2820.8 434.0L343.1 67.3M-10666.7 434.0L55.5 67.3M2843.9 434.0L345.0 67.3M-10766.7 434.0L47.2 67.3M2866.9 434.0L346.9 67.3M-10866.7 434.0L38.9 67.3M-10966.8 434.0L30.5 67.3M-11066.8 434.0L22.2 67.3M-11166.8 434.0L13.9 67.3M-11266.8 434.0L5.5 67.3M-11366.9 434.0L-2.8 67.3M-11466.9 434.0L-11.1 67.3M-11566.9 434.0L-19.5 67.3" stroke="#858a94" stroke-opacity="0.4" stroke-width="0.6" fill="none"/></g><g mask="url(#m2)"><path d="M-6646.9 434.0L-17.5 42.0M-6462.2 434.0L-13.8 42.0M-6277.4 434.0L-10.1 42.0M-6092.7 434.0L-6.4 42.0M-5908.0 434.0L-2.7 42.0M-5723.2 434.0L1.0 42.0M-5538.5 434.0L4.7 42.0M-5353.7 434.0L8.4 42.0M-5169.0 434.0L12.1 42.0M-4984.3 434.0L15.8 42.0M-4799.5 434.0L19.5 42.0M-4614.8 434.0L23.2 42.0M-4430.1 434.0L26.9 42.0M-4245.3 434.0L30.6 42.0M-4060.6 434.0L34.3 42.0M-3875.9 434.0L38.0 42.0M-3691.1 434.0L41.6 42.0M-3506.4 434.0L45.3 42.0M-3321.7 434.0L49.0 42.0M-3136.9 434.0L52.7 42.0M-2952.2 434.0L56.4 42.0M-2767.5 434.0L60.1 42.0M-2582.7 434.0L63.8 42.0M-2398.0 434.0L67.5 42.0M-2213.3 434.0L71.2 42.0M-2028.5 434.0L74.9 42.0M-1843.8 434.0L78.6 42.0M-1659.1 434.0L82.3 42.0M-1474.3 434.0L86.0 42.0M-1289.6 434.0L89.7 42.0M-1104.8 434.0L93.4 42.0M-920.1 434.0L97.1 42.0M-735.4 434.0L100.8 42.0M-550.6 434.0L104.5 42.0M-365.9 434.0L108.2 42.0M-181.2 434.0L111.8 42.0M3.6 434.0L115.5 42.0M188.3 434.0L119.2 42.0M373.0 434.0L122.9 42.0M-64.4 434.0L979.4 52.6M557.8 434.0L126.6 42.0M-864.6 434.0L945.7 51.9M742.5 434.0L130.3 42.0M-1664.7 434.0L914.5 51.2M927.2 434.0L134.0 42.0M-2464.9 434.0L885.6 50.6M1112.0 434.0L137.7 42.0M-3265.1 434.0L858.7 50.0M1296.7 434.0L141.4 42.0M-4065.3 434.0L833.6 49.4M1481.4 434.0L145.1 42.0M-4865.4 434.0L810.2 48.9M1666.2 434.0L148.8 42.0M-5665.6 434.0L788.2 48.5M1850.9 434.0L152.5 42.0M-6465.8 434.0L767.6 48.0M2035.6 434.0L156.2 42.0M-7266.0 434.0L748.3 47.6M2220.4 434.0L159.9 42.0M-8066.1 434.0L730.0 47.2M2405.1 434.0L163.6 42.0M-8866.3 434.0L712.8 46.8M2589.8 434.0L167.3 42.0M-9666.5 434.0L696.5 46.5M2774.6 434.0L171.0 42.0M-10466.7 434.0L681.1 46.1M2959.3 434.0L174.7 42.0M-11266.8 434.0L666.5 45.8M3144.1 434.0L178.4 42.0M-12067.0 434.0L652.6 45.5M3328.8 434.0L182.0 42.0M-12867.2 434.0L639.4 45.3M3513.5 434.0L185.7 42.0M-13667.4 434.0L626.9 45.0M3698.3 434.0L189.4 42.0M-14467.5 434.0L614.9 44.7M3883.0 434.0L193.1 42.0M-15267.7 434.0L603.5 44.5M4067.7 434.0L196.8 42.0M-16067.9 434.0L592.6 44.2M4252.5 434.0L200.5 42.0M-16868.1 434.0L582.1 44.0M4437.2 434.0L204.2 42.0M-17668.2 434.0L572.2 43.8M4621.9 434.0L207.9 42.0M-15207.8 367.1L562.6 43.6M4806.7 434.0L211.6 42.0M-8739.4 226.5L553.4 43.4M4991.4 434.0L215.3 42.0M-6110.6 169.4L544.7 43.2M5176.1 434.0L219.0 42.0M-4685.1 138.4L536.2 43.0M5360.9 434.0L222.7 42.0M-3790.6 119.0L528.1 42.8M5545.6 434.0L226.4 42.0M-3177.0 105.6L520.3 42.7M5730.3 434.0L230.1 42.0M-2729.9 95.9L512.8 42.5M5915.1 434.0L233.8 42.0M-2389.6 88.5L505.5 42.4M6099.8 434.0L237.5 42.0M-2122.0 82.7L498.5 42.2M6284.5 434.0L241.2 42.0M-1906.0 78.0L491.8 42.1M6469.3 434.0L244.9 42.0M-1728.0 74.1L480.3 42.0M6654.0 434.0L248.6 42.0M-1578.8 70.9L464.3 42.0M6838.7 434.0L252.2 42.0M-1451.9 68.1L448.3 42.0M7023.5 434.0L255.9 42.0M-1342.6 65.7L432.3 42.0M7208.2 434.0L259.6 42.0M-1247.6 63.7L416.3 42.0M7393.0 434.0L263.3 42.0M-1164.2 61.9L400.3 42.0M7577.7 434.0L267.0 42.0M-1090.4 60.3L384.3 42.0M7762.4 434.0L270.7 42.0M-1024.6 58.8L368.3 42.0M7947.2 434.0L274.4 42.0M-965.6 57.5L352.3 42.0M8131.9 434.0L278.1 42.0M-912.4 56.4L336.3 42.0M8316.6 434.0L281.8 42.0M-864.2 55.3L320.3 42.0M8501.4 434.0L285.5 42.0M-820.3 54.4L304.2 42.0M8686.1 434.0L289.2 42.0M-780.2 53.5L288.2 42.0M8870.8 434.0L292.9 42.0M-743.3 52.7L272.2 42.0M9055.6 434.0L296.6 42.0M-709.4 52.0L256.2 42.0M9240.3 434.0L300.3 42.0M-678.0 51.3L240.2 42.0M9425.0 434.0L304.0 42.0M-648.9 50.7L224.2 42.0M9609.8 434.0L307.7 42.0M-621.9 50.1L208.2 42.0M9794.5 434.0L311.4 42.0M-596.7 49.5L192.2 42.0M9979.2 434.0L315.1 42.0M-573.2 49.0L176.2 42.0M10164.0 434.0L318.7 42.0M-551.2 48.5L160.2 42.0M10348.7 434.0L322.4 42.0M-530.5 48.1L144.2 42.0M10533.4 434.0L326.1 42.0M-511.1 47.7L128.2 42.0M10718.2 434.0L329.8 42.0M-492.8 47.3L112.2 42.0M10902.9 434.0L333.5 42.0M-475.5 46.9L96.2 42.0M11087.6 434.0L337.2 42.0M-459.2 46.5L80.2 42.0M11272.4 434.0L340.9 42.0M-443.7 46.2L64.2 42.0M11457.1 434.0L344.6 42.0M-429.1 45.9L48.2 42.0M-415.2 45.6L32.2 42.0M-402.0 45.3L16.2 42.0M-389.4 45.0L0.2 42.0M-377.5 44.8L-15.8 42.0" stroke="#6a6f79" stroke-opacity="0.4" stroke-width="1.0" fill="none"/></g><defs><linearGradient id="hz" x1="0" y1="0" x2="0" y2="1"><stop offset="0" stop-color="#b7b4b8" stop-opacity="1"/><stop offset="0.12" stop-color="#b5b3b8" stop-opacity="0.95"/><stop offset="0.5" stop-color="#b2b2b8" stop-opacity="0.45"/><stop offset="1" stop-color="#b0b2b8" stop-opacity="0"/></linearGradient></defs><rect x="0" y="34" width="328" height="16" fill="url(#hz)"/><ellipse cx="101.0" cy="104.0" rx="15" ry="8.5" fill="#3e6e9c" opacity="0.85" transform="rotate(-8 101.0 104.0)"/><path d="M154.0 101.5L174.0 97.0L175.0 114.0L166.0 111.0Z" fill="#3f6d9a" opacity="0.85"/><ellipse cx="32.0" cy="137.0" rx="5.5" ry="10" fill="#4a6f96" opacity="0.8" transform="rotate(20 32.0 137.0)"/><ellipse cx="129" cy="108" rx="21" ry="7.2" fill="#245a92"/><rect x="108" y="104" width="42" height="4" fill="#2a66a6"/><ellipse cx="129" cy="104" rx="21" ry="6.5" fill="#3274b8"/><ellipse cx="129" cy="105.5" rx="15.5" ry="5" fill="#2b3036"/><rect x="120" y="101" width="3" height="2" fill="#e8e4c8"/><rect x="135" y="101" width="3" height="2" fill="#e8e4c8"/><defs><radialGradient id="bg1" cx="0.45" cy="0.35" r="0.75"><stop offset="0" stop-color="#3a86cc"/><stop offset="0.8" stop-color="#2a6cae"/><stop offset="1" stop-color="#1d4f86"/></radialGradient><linearGradient id="sil" x1="1" y1="0" x2="0" y2="1"><stop offset="0" stop-color="#e4e8ec"/><stop offset="0.45" stop-color="#7c8690"/><stop offset="1" stop-color="#1e242a"/></linearGradient><radialGradient id="eye" cx="0.4" cy="0.4" r="0.7"><stop offset="0" stop-color="#5aaae6"/><stop offset="1" stop-color="#2f7cc0"/></radialGradient></defs><ellipse cx="127.80000000000001" cy="82" rx="22.2" ry="21" fill="url(#bg1)"/><ellipse cx="128.8" cy="82.5" rx="17" ry="15.5" fill="url(#sil)"/><ellipse cx="127.80000000000001" cy="83.5" rx="12.5" ry="12" fill="#161c22"/><circle cx="128.3" cy="84" r="9.5" fill="url(#eye)"/><circle cx="128.3" cy="84" r="3.6" fill="#05080b"/><path d="M105.80000000000001 84H112.80000000000001M142.8 83H149.8" stroke="#1a2a3a" stroke-width="1"/><path d="M32.2 122.0L48.4 120.0L52.8 140.0L36.6 143.0Z" fill="#d81c1c" /><ellipse cx="44.7" cy="141.5" rx="8.2" ry="3.2" fill="#d81c1c" transform="rotate(-10 44.7 141.5)"/><ellipse cx="40.3" cy="121.0" rx="8.2" ry="3.2" fill="#7a1010" transform="rotate(-10 40.3 121.0)"/><ellipse cx="40.6" cy="115.5" rx="8.3" ry="7" fill="#1ed21a"/><path d="M174.0 86.0L178.0 83.0L206.0 83.0L206.5 111.0L202.0 115.5L174.5 115.5Z" fill="#1b2fea" /><path d="M174.0 86.0L178.0 83.0L206.0 83.0L202.0 86.0Z" fill="#3247f2" /><g stroke="#ffffff" stroke-width="1" fill="none"><path d="M241.6 124.6L252.0 61.0"/><path d="M241.6 124.6L233.4 180.0"/><path d="M241.6 124.6L321.0 155.3"/><path d="M241.6 124.6L193.6 134.7"/><path d="M241.6 124.6L274.6 118.3"/><path d="M241.6 124.6L196.0 99.5" stroke-width="0.8"/><path d="M241.6 124.6L202.0 101.0" stroke-width="0.8"/><path d="M241.6 124.6L204.0 108.0" stroke-width="0.8"/><path d="M241.6 124.6L200.0 114.0" stroke-width="0.8"/><path d="M241.6 124.6L192.0 114.0" stroke-width="0.8"/><path d="M241.6 124.6L206.0 105.0" stroke-width="0.8"/><path d="M241.6 124.6L204.5 112.0" stroke-width="0.8"/></g><path d="M252.0 60.6L254.4 86.1L242.6 84.5Z" fill="#fff"/><path d="M233.4 180.0L230.3 158.6L242.1 160.2Z" fill="#fff"/><path d="M321.2 155.3L281.8 148.2L286.6 135.0Z" fill="#fff"/><path d="M193.6 134.7L216.0 124.9L218.0 136.3Z" fill="#fff"/><path d="M274.6 118.3L260.3 125.5L258.7 116.5Z" fill="#fff"/><path d="M203.2 107.3L218.1 110.0L213.9 118.0Z" fill="#fff"/><circle cx="196.4" cy="107.3" r="8.2" fill="none" stroke="#fff" stroke-width="1.2"/><path d="M188.2 107.3H204.6M196.4 99.1V115.5" stroke="#fff" stroke-width="1"/><ellipse cx="196.4" cy="108.3" rx="7.5" ry="3.5" fill="none" stroke="#fff" stroke-width="0.8"/></svg>
<div class="r" style="left:484px;top:75px;width:4px;height:229px;background:#424346;"></div>
<div class="r" style="left:488px;top:75px;width:1.5px;height:229px;background:#2e2f32;"></div>
<div class="r" style="left:489px;top:57px;width:93px;height:19px;background:#424346;border-radius:4px 4px 0 0;box-shadow:inset 0 1px 0 #3a9fd8;"></div>
<div class="r" style="left:489px;top:59px;width:1px;height:16px;background:linear-gradient(#3a9fd8,#3a4b58 70%,#45484c);"></div>
<div class="r" style="left:581px;top:59px;width:1px;height:16px;background:linear-gradient(#3a9fd8,#3a4b58 70%,#45484c);"></div>
<div class="r" style="left:490px;top:57px;width:91px;height:3px;border-top:1px solid #3a9fd8;border-radius:4px 4px 0 0;box-sizing:border-box;border-left:1px solid #3a9fd8;border-right:1px solid #3a9fd8;"></div>
<div class="t" style="left:497.6px;top:62px;font-size:10.6px;line-height:10.6px;color:#f0f0f0;font-weight:normal;font-style:normal;letter-spacing:0px;">Parameters</div>
<svg class="r" style="left:571px;top:65px;" width="6" height="6" viewBox="0 0 6 6"><path d="M0.5 0.5L5.5 5.5M5.5 0.5L0.5 5.5" stroke="#c4c4c4" stroke-width="0.9"/></svg>
<div class="r" style="left:489.5px;top:75px;width:354.5px;height:229px;background:#424346;"></div>
<div class="r" style="left:582px;top:75px;width:262px;height:1px;background:#525356;"></div>
<div class="r" style="left:536.5px;top:78.5px;width:53px;height:17.5px;background:#333437;border-radius:3px 3px 0 0;"></div>
<div class="t" style="left:545px;top:84px;font-size:10.3px;line-height:10.3px;color:#c6c6c6;font-weight:normal;font-style:normal;letter-spacing:0px;">Physics</div>
<div class="r" style="left:492px;top:78px;width:41px;height:18px;background:#424346;border:1px solid #3a9fd8;border-bottom:none;border-radius:4px 4px 0 0;border-left-color:#2f6d92;border-right-color:#2f6d92;"></div>
<div class="t" style="left:500.6px;top:84px;font-size:10.4px;line-height:10.4px;color:#e6e6e6;font-weight:normal;font-style:normal;letter-spacing:0px;">Node</div>
<div class="r" style="left:492px;top:96px;width:349px;height:206px;border:1px solid #4b4c50;border-bottom:none;background:#424346;"></div>
<div class="r" style="left:826px;top:97px;width:15px;height:203px;background:#2a2b2e;"></div>
<div class="r" style="left:829px;top:100px;width:9px;height:135px;background:#5b5c60;border-radius:3px;"></div>
<div class="r" style="left:505.5px;top:109.5px;width:9.5px;height:9.5px;border:1px solid #787878;border-radius:2px;background:#1e1f22;"></div>
<div class="r" style="left:507.5px;top:111.5px;width:7.5px;height:7.5px;background:#a4a4a4;"></div>
<div class="r" style="left:526.5px;top:105px;width:286px;height:17.5px;background:#28292c;border:1px solid #525357;"></div>
<div class="t" style="left:531.2px;top:111px;font-size:10.8px;line-height:10.8px;color:#d8d8d8;font-weight:normal;font-style:normal;letter-spacing:0px;">LightProj</div>
<div class="t" style="left:504.5px;top:135px;font-size:13.4px;line-height:13.4px;color:#c8ccd0;font-weight:bold;font-style:normal;letter-spacing:0px;">Type:</div>
<div class="t" style="left:546px;top:137px;font-size:11.4px;line-height:11.4px;color:#c8ccd0;font-weight:bold;font-style:normal;letter-spacing:0px;">LightProj</div>
<div class="t" style="right:184.79999999999995px;top:136px;font-size:12.85px;line-height:12.85px;color:#c8ccd0;font-weight:bold;font-style:normal;letter-spacing:0px;">ID: 1718963106</div>
<div class="r" style="left:541px;top:130.4px;width:59.5px;height:20.2px;border:2px solid #ff8000;border-radius:3px;"></div>
<div class="r" style="left:495.5px;top:157px;width:328px;height:1px;background:#2a2b2e;"></div>
<svg class="r" style="left:500.8px;top:168px;" width="8.7" height="4.2" viewBox="0 0 8.7 4.2"><path d="M0 0H8.7L4.35 4.2Z" fill="#d0d0d0"/></svg>
<div class="t" style="left:519.8px;top:167px;font-size:10.1px;line-height:10.1px;color:#e0e0e0;font-weight:normal;font-style:normal;letter-spacing:0px;">Common</div>
<div class="t" style="right:430px;top:197px;font-size:10.5px;line-height:10.5px;color:#c4c4c4;font-weight:normal;font-style:normal;letter-spacing:0px;">Position</div>
<div class="r" style="left:577px;top:192px;width:67px;height:18px;background:#28292c;"></div>
<div class="t" style="left:581.5px;top:197px;font-size:10.8px;line-height:10.8px;color:#d6d6d6;font-weight:normal;font-style:normal;letter-spacing:0px;">1.064</div>
<svg class="r" style="left:629.5px;top:196.5px;" width="9" height="9" viewBox="0 0 9 9"><path d="M1.5 0H9V7.5Z" fill="#c4c4c4"/><path d="M0 1.5V9H7.5Z" fill="#7c7c7c"/></svg>
<div class="r" style="left:650px;top:192px;width:67px;height:18px;background:#28292c;"></div>
<div class="t" style="left:654.5px;top:197px;font-size:10.8px;line-height:10.8px;color:#d6d6d6;font-weight:normal;font-style:normal;letter-spacing:0px;">-2.077</div>
<svg class="r" style="left:702.5px;top:196.5px;" width="9" height="9" viewBox="0 0 9 9"><path d="M1.5 0H9V7.5Z" fill="#c4c4c4"/><path d="M0 1.5V9H7.5Z" fill="#7c7c7c"/></svg>
<div class="r" style="left:723px;top:192px;width:66.5px;height:18px;background:#28292c;"></div>
<div class="t" style="left:727.5px;top:197px;font-size:10.8px;line-height:10.8px;color:#d6d6d6;font-weight:normal;font-style:normal;letter-spacing:0px;">0.657</div>
<svg class="r" style="left:775.0px;top:196.5px;" width="9" height="9" viewBox="0 0 9 9"><path d="M1.5 0H9V7.5Z" fill="#c4c4c4"/><path d="M0 1.5V9H7.5Z" fill="#7c7c7c"/></svg>
<svg class="r" style="left:795.5px;top:193.5px;" width="17" height="16" viewBox="0 0 17 16"><path d="M4.2 4.6A5.8 5.8 0 1 1 4 11.5" fill="none" stroke="#d8d8d8" stroke-width="1.8"/><path d="M0.8 2.2L6.8 2.6L3.2 7.8Z" fill="#d8d8d8"/></svg>
<div class="t" style="right:430px;top:221px;font-size:10.5px;line-height:10.5px;color:#c4c4c4;font-weight:normal;font-style:normal;letter-spacing:0px;">Rotation</div>
<div class="r" style="left:577px;top:216px;width:67px;height:18px;background:#28292c;"></div>
<div class="t" style="left:581.5px;top:221px;font-size:10.8px;line-height:10.8px;color:#d6d6d6;font-weight:normal;font-style:normal;letter-spacing:0px;">84.299</div>
<svg class="r" style="left:629.5px;top:220.5px;" width="9" height="9" viewBox="0 0 9 9"><path d="M1.5 0H9V7.5Z" fill="#c4c4c4"/><path d="M0 1.5V9H7.5Z" fill="#7c7c7c"/></svg>
<div class="r" style="left:650px;top:216px;width:67px;height:18px;background:#28292c;"></div>
<div class="t" style="left:654.5px;top:221px;font-size:10.8px;line-height:10.8px;color:#d6d6d6;font-weight:normal;font-style:normal;letter-spacing:0px;">19.170</div>
<svg class="r" style="left:702.5px;top:220.5px;" width="9" height="9" viewBox="0 0 9 9"><path d="M1.5 0H9V7.5Z" fill="#c4c4c4"/><path d="M0 1.5V9H7.5Z" fill="#7c7c7c"/></svg>
<div class="r" style="left:723px;top:216px;width:66.5px;height:18px;background:#28292c;"></div>
<div class="t" style="left:727.5px;top:221px;font-size:10.8px;line-height:10.8px;color:#d6d6d6;font-weight:normal;font-style:normal;letter-spacing:0px;">264.199</div>
<svg class="r" style="left:775.0px;top:220.5px;" width="9" height="9" viewBox="0 0 9 9"><path d="M1.5 0H9V7.5Z" fill="#c4c4c4"/><path d="M0 1.5V9H7.5Z" fill="#7c7c7c"/></svg>
<svg class="r" style="left:795.5px;top:217.5px;" width="17" height="16" viewBox="0 0 17 16"><path d="M4.2 4.6A5.8 5.8 0 1 1 4 11.5" fill="none" stroke="#d8d8d8" stroke-width="1.8"/><path d="M0.8 2.2L6.8 2.6L3.2 7.8Z" fill="#d8d8d8"/></svg>
<div class="t" style="right:430px;top:245px;font-size:10.5px;line-height:10.5px;color:#c4c4c4;font-weight:normal;font-style:normal;letter-spacing:0px;">Scale</div>
<div class="r" style="left:577px;top:240px;width:67px;height:18px;background:#28292c;"></div>
<div class="t" style="left:581.5px;top:245px;font-size:10.8px;line-height:10.8px;color:#d6d6d6;font-weight:normal;font-style:normal;letter-spacing:0px;">1.000</div>
<svg class="r" style="left:629.5px;top:244.5px;" width="9" height="9" viewBox="0 0 9 9"><path d="M1.5 0H9V7.5Z" fill="#c4c4c4"/><path d="M0 1.5V9H7.5Z" fill="#7c7c7c"/></svg>
<div class="r" style="left:650px;top:240px;width:67px;height:18px;background:#28292c;"></div>
<div class="t" style="left:654.5px;top:245px;font-size:10.8px;line-height:10.8px;color:#d6d6d6;font-weight:normal;font-style:normal;letter-spacing:0px;">1.000</div>
<svg class="r" style="left:702.5px;top:244.5px;" width="9" height="9" viewBox="0 0 9 9"><path d="M1.5 0H9V7.5Z" fill="#c4c4c4"/><path d="M0 1.5V9H7.5Z" fill="#7c7c7c"/></svg>
<div class="r" style="left:723px;top:240px;width:66.5px;height:18px;background:#28292c;"></div>
<div class="t" style="left:727.5px;top:245px;font-size:10.8px;line-height:10.8px;color:#d6d6d6;font-weight:normal;font-style:normal;letter-spacing:0px;">1.000</div>
<svg class="r" style="left:775.0px;top:244.5px;" width="9" height="9" viewBox="0 0 9 9"><path d="M1.5 0H9V7.5Z" fill="#c4c4c4"/><path d="M0 1.5V9H7.5Z" fill="#7c7c7c"/></svg>
<svg class="r" style="left:795.5px;top:241.5px;" width="17" height="16" viewBox="0 0 17 16"><path d="M4.2 4.6A5.8 5.8 0 1 1 4 11.5" fill="none" stroke="#d8d8d8" stroke-width="1.8"/><path d="M0.8 2.2L6.8 2.6L3.2 7.8Z" fill="#d8d8d8"/></svg>
<div class="t" style="right:369px;top:270px;font-size:10.6px;line-height:10.6px;color:#c4c4c4;font-weight:normal;font-style:normal;letter-spacing:0px;">Collider Object</div>
<div class="r" style="left:639.4px;top:268.6px;width:10px;height:10px;border:1px solid #77787b;border-radius:1px;"></div>
<div class="r" style="left:641.9px;top:271.1px;width:7px;height:7px;background:#9a9a9a;"></div>
<div class="t" style="right:211.70000000000005px;top:270px;font-size:10.6px;line-height:10.6px;color:#c4c4c4;font-weight:normal;font-style:normal;letter-spacing:0px;">Culled by Clutter Tree</div>
<div class="r" style="left:795.6px;top:268.4px;width:10px;height:10px;border:1px solid #77787b;border-radius:1px;"></div>
<div class="t" style="right:369px;top:289px;font-size:10.6px;line-height:10.6px;color:#c4c4c4;font-weight:normal;font-style:normal;letter-spacing:0px;">Visibility by Sectors/Portals</div>
<div class="r" style="left:639.4px;top:288.6px;width:10px;height:10px;border:1px solid #77787b;border-radius:1px;"></div>
<div class="r" style="left:641.9px;top:291.1px;width:7px;height:7px;background:#9a9a9a;"></div>
<div class="t" style="right:211.70000000000005px;top:289px;font-size:10.6px;line-height:10.6px;color:#c4c4c4;font-weight:normal;font-style:normal;letter-spacing:0px;">Culled by Occlusion Query</div>
<div class="r" style="left:795.6px;top:288.4px;width:10px;height:10px;border:1px solid #77787b;border-radius:1px;"></div>
<div class="r" style="left:489.5px;top:301px;width:354.5px;height:3px;background:#424346;"></div>
<div class="r" style="left:492px;top:301.8px;width:350px;height:1px;background:#505155;"></div>
<svg class="r" style="left:828.5px;top:59.5px;" width="9" height="12" viewBox="0 0 9 12"><path d="M1.8 6.5V3.6A2.8 2.8 0 0 1 7.4 3.2" fill="none" stroke="#bdbdbd" stroke-width="1.3"/><rect x="0.8" y="6.3" width="7.6" height="5" fill="#c4c4c4"/><rect x="3.6" y="7.8" width="1.8" height="2.2" fill="#444"/></svg>
<div class="r" style="left:0px;top:304px;width:844px;height:1px;background:#242528;"></div>
<div class="r" style="left:1px;top:305.5px;width:105.5px;height:18.5px;background:#424346;border-radius:4px 4px 0 0;box-shadow:inset 0 1px 0 #3a9fd8;"></div>
<div class="r" style="left:1px;top:307.5px;width:1px;height:15.5px;background:linear-gradient(#3a9fd8,#3a4b58 70%,#45484c);"></div>
<div class="r" style="left:105.5px;top:307.5px;width:1px;height:15.5px;background:linear-gradient(#3a9fd8,#3a4b58 70%,#45484c);"></div>
<div class="r" style="left:2px;top:305.5px;width:103.5px;height:3px;border-top:1px solid #3a9fd8;border-radius:4px 4px 0 0;box-sizing:border-box;border-left:1px solid #3a9fd8;border-right:1px solid #3a9fd8;"></div>
<div class="t" style="left:9px;top:310px;font-size:10.6px;line-height:10.6px;color:#f0f0f0;font-weight:normal;font-style:normal;letter-spacing:0px;">Asset Browser</div>
<svg class="r" style="left:95.5px;top:313.5px;" width="6" height="6" viewBox="0 0 6 6"><path d="M0.5 0.5L5.5 5.5M5.5 0.5L0.5 5.5" stroke="#c4c4c4" stroke-width="0.9"/></svg>
<div class="r" style="left:0px;top:323px;width:844px;height:185px;background:#424346;"></div>
<div class="r" style="left:106.5px;top:323px;width:737.5px;height:1px;background:#525356;"></div>
<div class="r" style="left:0px;top:323px;width:1px;height:185px;background:#2e2f32;"></div>
<div class="r" style="left:3.2px;top:325px;width:174px;height:181.5px;background:#262729;border-radius:2px;"></div>
<div class="r" style="left:4px;top:327px;width:172px;height:19.5px;background:#2c5472;"></div>
<svg class="r" style="left:7.8px;top:335.3px;" width="7.5" height="4" viewBox="0 0 7.5 4"><path d="M0 0H7.5L3.75 4Z" fill="#a8a8a8"/></svg>
<svg class="r" style="left:22px;top:330px;" width="16.5" height="14" viewBox="0 0 16.5 14"><path d="M0.5 1.5Q0.5 0.5 1.5 0.5H6L7.5 2H15.0Q16.0 2 16.0 3V13.5H0.5Z" fill="#3a86bf"/><rect x="1.5" y="3" width="13.5" height="3" fill="#dde2e6"/><path d="M0.5 4.5H16.0V13.5H0.5Z" fill="#5aaee0"/></svg>
<svg class="r" style="left:25px;top:335px;" width="10" height="8" viewBox="0 0 10 8"><path d="M1 4L5 1L9 4M2.5 3.5V7.5H7.5V3.5" fill="none" stroke="#3a8ac4" stroke-width="0.9"/></svg>
<div class="t" style="left:44.7px;top:332px;font-size:11.7px;line-height:11.7px;color:#e6e6e6;font-weight:normal;font-style:normal;letter-spacing:0px;">data</div>
<svg class="r" style="left:37.3px;top:349.8px;" width="15.7" height="13.8" viewBox="0 0 15.7 13.8"><path d="M0.5 1.5Q0.5 0.5 1.5 0.5H6L7.5 2H14.2Q15.2 2 15.2 3V13.3H0.5Z" fill="#3a86bf"/><rect x="1.5" y="3" width="12.7" height="3" fill="#dde2e6"/><path d="M0.5 4.5H15.2V13.3H0.5Z" fill="#5aaee0"/></svg>
<div class="t" style="left:58.8px;top:353px;font-size:11.8px;line-height:11.8px;color:#e6e6e6;font-weight:normal;font-style:normal;letter-spacing:0px;">template_materia</div>
<svg class="r" style="left:37.3px;top:369.8px;" width="15.7" height="13.8" viewBox="0 0 15.7 13.8"><path d="M0.5 1.5Q0.5 0.5 1.5 0.5H6L7.5 2H14.2Q15.2 2 15.2 3V13.3H0.5Z" fill="#3a86bf"/><rect x="1.5" y="3" width="12.7" height="3" fill="#dde2e6"/><path d="M0.5 4.5H15.2V13.3H0.5Z" fill="#5aaee0"/></svg>
<div class="t" style="left:58.8px;top:371px;font-size:11.7px;line-height:11.7px;color:#e6e6e6;font-weight:normal;font-style:normal;letter-spacing:0px;">template_render_ings</div>
<svg class="r" style="left:9px;top:394px;" width="5" height="8" viewBox="0 0 5 8"><path d="M0 0L5 4L0 8Z" fill="#a8a8a8"/></svg>
<svg class="r" style="left:22px;top:389.6px;" width="16.5" height="14.5" viewBox="0 0 16.5 14.5"><path d="M0.5 1.5Q0.5 0.5 1.5 0.5H6L7.5 2H15.0Q16.0 2 16.0 3V14.0H0.5Z" fill="#5a9a3a"/><rect x="1.5" y="3" width="13.5" height="3" fill="#dde2e6"/><path d="M0.5 4.5H16.0V14.0H0.5Z" fill="#7fc45a"/></svg>
<svg class="r" style="left:30.5px;top:397.5px;" width="8" height="8" viewBox="0 0 8 8"><circle cx="4" cy="4" r="3.6" fill="#e8e8e8"/><rect x="2.5" y="3.5" width="3" height="2.5" fill="#333"/></svg>
<div class="t" style="left:44.7px;top:391px;font-size:11.7px;line-height:11.7px;color:#e6e6e6;font-weight:normal;font-style:normal;letter-spacing:0px;">core</div>
<svg class="r" style="left:184px;top:333.5px;" width="6" height="7.5" viewBox="0 0 6 7.5"><path d="M5.5 0.5L0.8 3.75L5.5 7" fill="none" stroke="#5c5d60" stroke-width="1"/></svg>
<div class="r" style="left:200.6px;top:327px;width:58.4px;height:17.8px;background:#56575b;border-radius:3px;"></div>
<div class="t" style="left:29.80000000000001px;width:400px;text-align:center;top:332px;font-size:11.2px;line-height:11.2px;color:#e0e0e0;font-weight:normal;font-style:normal;letter-spacing:0px;">data</div>
<svg class="r" style="left:352px;top:333.5px;" width="6" height="7.5" viewBox="0 0 6 7.5"><path d="M0.5 0.5L5.2 3.75L0.5 7" fill="none" stroke="#5c5d60" stroke-width="1"/></svg>
<div class="r" style="left:368.4px;top:327px;width:122px;height:16.5px;background:#28292c;border:1px solid #525357;"></div>
<div class="t" style="left:373.2px;top:332px;font-size:10.8px;line-height:10.8px;color:#6f6f6f;font-weight:normal;font-style:normal;letter-spacing:0px;">Search</div>
<div class="r" style="left:496px;top:327px;width:58px;height:17.5px;background:#56575b;border-radius:3px;"></div>
<div class="t" style="left:325px;width:400px;text-align:center;top:331px;font-size:10.8px;line-height:10.8px;color:#e6e6e6;font-weight:normal;font-style:normal;letter-spacing:0px;">Import</div>
<div class="r" style="left:558px;top:326.8px;width:58px;height:17.7px;background:#56575b;border-radius:3px;"></div>
<div class="t" style="left:563.7px;top:331px;font-size:10.9px;line-height:10.9px;color:#e6e6e6;font-weight:normal;font-style:normal;letter-spacing:0px;">Create</div>
<svg class="r" style="left:603px;top:333.6px;" width="9.4" height="5.4" viewBox="0 0 9.4 5.4"><path d="M0 0H9.4L4.7 5.4Z" fill="#e8e8e8"/></svg>
<div class="r" style="left:620px;top:326.8px;width:58px;height:17.7px;background:#56575b;border-radius:3px;"></div>
<div class="t" style="left:630.4px;top:331px;font-size:10.7px;line-height:10.7px;color:#e6e6e6;font-weight:normal;font-style:normal;letter-spacing:0px;">Filter</div>
<svg class="r" style="left:665px;top:333.6px;" width="9" height="5.4" viewBox="0 0 9 5.4"><path d="M0 0H9L4.5 5.4Z" fill="#e8e8e8"/></svg>
<div class="r" style="left:179.6px;top:347.7px;width:499.4px;height:136.8px;background:#28292c;border-radius:3px;"></div>
<svg class="r" style="left:191px;top:354.5px;" width="66.5" height="58.5" viewBox="0 0 66.5 58.5"><path d="M0.7 3Q0.7 0.5 3.5 0.5H20L23.5 4.2H53.5Q56.0 4.2 56.0 6.5V56.5H3Q0.7 56.5 0.7 54.5Z" fill="#3a7fb5"/><rect x="4" y="8" width="48.5" height="47.5" fill="#dcdfe2"/><path d="M5.5 17.5Q5.5 15 8 15H63.0Q65.0 15 65.0 17.5V55.0Q65.0 57.0 63.0 57.0H3.5Q5.5 57.0 5.5 55.0Z" fill="#5eafe0"/><path d="M0.7 53.5Q1 57.0 4 57.0H5.5V53.5Q4 56.0 4 52.5Z" fill="#2f6d9e"/></svg>
<div class="t" style="left:22px;width:400px;text-align:center;top:420px;font-size:11.6px;line-height:11.6px;color:#e8e8e8;font-weight:normal;font-style:normal;letter-spacing:0px;">template_ma...</div>
<svg class="r" style="left:277.7px;top:354.5px;" width="66.7" height="58.5" viewBox="0 0 66.7 58.5"><path d="M0.7 3Q0.7 0.5 3.5 0.5H20L23.5 4.2H53.7Q56.2 4.2 56.2 6.5V56.5H3Q0.7 56.5 0.7 54.5Z" fill="#3a7fb5"/><rect x="4" y="8" width="48.7" height="47.5" fill="#dcdfe2"/><path d="M5.5 17.5Q5.5 15 8 15H63.2Q65.2 15 65.2 17.5V55.0Q65.2 57.0 63.2 57.0H3.5Q5.5 57.0 5.5 55.0Z" fill="#5eafe0"/><path d="M0.7 53.5Q1 57.0 4 57.0H5.5V53.5Q4 56.0 4 52.5Z" fill="#2f6d9e"/></svg>
<div class="t" style="left:109px;width:400px;text-align:center;top:420px;font-size:11.6px;line-height:11.6px;color:#e8e8e8;font-weight:normal;font-style:normal;letter-spacing:0px;">template_ren...</div>
<svg class="r" style="left:373.5px;top:352px;" width="48" height="61" viewBox="0 0 48 61"><defs><linearGradient id="ud" x1="0" y1="0" x2="0" y2="1"><stop offset="0" stop-color="#d2d2d2"/><stop offset="1" stop-color="#f2f2f2"/></linearGradient></defs><path d="M0.5 0.5H34L47.5 14V60.5H0.5Z" fill="url(#ud)" stroke="#b8b8b8" stroke-width="0.6"/><path d="M34 0.5V14H47.5Z" fill="#f4f4f4"/><path d="M34 14H47.5V16H34Z" fill="#c4c4c4" opacity="0.6"/><g fill="none" stroke="#575757" stroke-width="2.3"><path d="M16.5 24.5L9 30.8L16.5 37"/><path d="M31 24.5L38.5 30.8L31 37"/><path d="M26.5 21L21.5 41"/></g></svg>
<div class="t" style="left:197px;width:400px;text-align:center;top:421px;font-size:11.4px;line-height:11.4px;color:#e8e8e8;font-weight:normal;font-style:normal;letter-spacing:0px;">project.usc</div>
<div class="r" style="left:446px;top:349px;width:76px;height:85px;background:#2c5472;"></div>
<svg class="r" style="left:460.5px;top:352px;" width="48.3" height="61" viewBox="0 0 48.3 61"><defs><linearGradient id="wd" x1="0" y1="0" x2="0" y2="1"><stop offset="0" stop-color="#a4bfd9"/><stop offset="1" stop-color="#c0d8ee"/></linearGradient></defs><path d="M0.5 0.5H34L47.8 14V60.5H0.5Z" fill="url(#wd)" stroke="#8aa4bc" stroke-width="0.8"/><path d="M34 0.5V14H47.8Z" fill="#cde0f2"/><circle cx="23.5" cy="31" r="14" fill="#3b5671"/><path d="M12 24Q15 19 20 18L22 20L19 22L21 24L25 22L27 19L30 19L33 22L30 24L26 24L25 27L19 27L14 29Z" fill="#6bb37f"/><path d="M17 29L24 28.5L28 30L31 32L30 36L28 39L26 43L23.5 44L22 38L19 35L16 33Z" fill="#6bb37f"/><path d="M33 30L36 31L35 35L32.5 34Z" fill="#6bb37f"/></svg>
<div class="t" style="left:284px;width:400px;text-align:center;top:421px;font-size:11.8px;line-height:11.8px;color:#f4f4f4;font-weight:normal;font-style:normal;letter-spacing:0px;">project.world</div>
<div class="r" style="left:444.2px;top:347.2px;width:75.7px;height:84.5px;border:2px solid #ff8000;border-radius:3px;"></div>
<div class="t" style="left:179px;top:494px;font-size:10.4px;line-height:10.4px;color:#c0c0c0;font-weight:normal;font-style:normal;letter-spacing:0px;">4 items</div>
<div class="r" style="left:579.5px;top:495px;width:98.5px;height:5px;background:#2a2b2e;border-radius:2.5px;"></div>
<div class="r" style="left:608px;top:491.6px;width:9px;height:11.4px;background:#b8b8b8;border-radius:2px;background:linear-gradient(#d8d8d8,#9a9a9a);"></div>
<svg class="r" style="left:696px;top:349.5px;" width="131" height="114" viewBox="0 0 131 114"><path d="M0.7 5Q0.7 0.7 5 0.7H42L49 8.8H116Q120.7 8.8 120.7 13V110.5H5Q0.7 110.5 0.7 106Z" fill="#3f84bd"/><rect x="6.7" y="16.5" width="108.3" height="92" fill="#dfe2e4"/><rect x="6.7" y="16.5" width="108.3" height="1" fill="#b8c4cc"/><path d="M10 35Q10 30.5 14.5 30.5H125Q129 30.5 129 35V108Q129 112.2 125 112.2H6Q10 112.2 10 108Z" fill="#5fb0e0"/><path d="M0.7 104Q1 112 8 112.2H10V106Q6.7 111 6.7 104Z" fill="#2b6a9c"/><g fill="none" stroke-linejoin="miter"><path d="M36 73L66 46.5L95 73M44 66V97.5H56.5V78H75.5V97.5H87.5V66M80 54V41.5H88.5V60.5" stroke="#2b6fa6" stroke-width="5.4"/><path d="M36 73L66 46.5L95 73M44 66V97.5H56.5V78H75.5V97.5H87.5V66M80 54V41.5H88.5V60.5" stroke="#5fb0e0" stroke-width="1.5"/></g></svg>
<div class="t" style="left:560.7px;width:400px;text-align:center;top:467px;font-size:12.2px;line-height:12.2px;color:#c8c8c8;font-weight:bold;font-style:normal;letter-spacing:0px;">data</div>
<div class="t" style="left:560.8px;width:400px;text-align:center;top:483px;font-size:11px;line-height:11px;color:#c8c8c8;font-weight:normal;font-style:normal;letter-spacing:0px;">Assets : 2</div>
<div class="t" style="left:561px;width:400px;text-align:center;top:496px;font-size:10.8px;line-height:10.8px;color:#c8c8c8;font-weight:normal;font-style:normal;letter-spacing:0px;">Directories : 2</div>
<svg class="r" style="left:0;top:0" width="1000" height="510"><path d="M135 101L177 73L861 73" fill="none" stroke="#ff8000" stroke-width="2" stroke-linejoin="round"/><path d="M604.5 137.5L908.7 206" fill="none" stroke="#ff8000" stroke-width="2" stroke-linejoin="round"/><path d="M294.7 291.5L204 241" fill="none" stroke="#3a404a" stroke-opacity="0.35" stroke-width="3.4" stroke-linejoin="round"/><path d="M294.7 291.5L204 241" fill="none" stroke="#ff8000" stroke-width="2" stroke-linejoin="round"/><path d="M294.7 291.5L202 214" fill="none" stroke="#3a404a" stroke-opacity="0.35" stroke-width="3.4" stroke-linejoin="round"/><path d="M294.7 291.5L202 214" fill="none" stroke="#ff8000" stroke-width="2" stroke-linejoin="round"/><path d="M294.7 291.5L285.6 205.6" fill="none" stroke="#3a404a" stroke-opacity="0.35" stroke-width="3.4" stroke-linejoin="round"/><path d="M294.7 291.5L285.6 205.6" fill="none" stroke="#ff8000" stroke-width="2" stroke-linejoin="round"/><path d="M294.7 291.5L337.2 211.6" fill="none" stroke="#3a404a" stroke-opacity="0.35" stroke-width="3.4" stroke-linejoin="round"/><path d="M294.7 291.5L337.2 211.6" fill="none" stroke="#ff8000" stroke-width="2" stroke-linejoin="round"/><path d="M294.7 291.5L393.6 222.4" fill="none" stroke="#3a404a" stroke-opacity="0.35" stroke-width="3.4" stroke-linejoin="round"/><path d="M294.7 291.5L393.6 222.4" fill="none" stroke="#ff8000" stroke-width="2" stroke-linejoin="round"/><path d="M294.7 292.8L910 292.8" fill="none" stroke="#ff8000" stroke-width="2" stroke-linejoin="round"/><path d="M524 361.7L909 361.7" fill="none" stroke="#ff8000" stroke-width="2" stroke-linejoin="round"/></svg>
<div class="t" style="left:863.7px;top:65px;font-size:14px;line-height:14px;color:#000;font-weight:bold;font-style:normal;letter-spacing:0.87px;">Nodes Hierarchy</div>
<div class="t" style="left:726.5px;width:400px;text-align:center;top:82px;font-size:13.6px;line-height:13.6px;color:#111;font-weight:normal;font-style:italic;letter-spacing:0.85px;">(scene graph)</div>
<div class="t" style="left:913.4px;top:199px;font-size:14px;line-height:14px;color:#000;font-weight:bold;font-style:normal;letter-spacing:0.98px;">Node type</div>
<div class="t" style="left:913.4px;top:286px;font-size:14px;line-height:14px;color:#000;font-weight:bold;font-style:normal;letter-spacing:0.62px;">Nodes</div>
<div class="t" style="left:912.8px;top:354px;font-size:14px;line-height:14px;color:#000;font-weight:bold;font-style:normal;letter-spacing:1.06px;">World file</div>
</body></html>
